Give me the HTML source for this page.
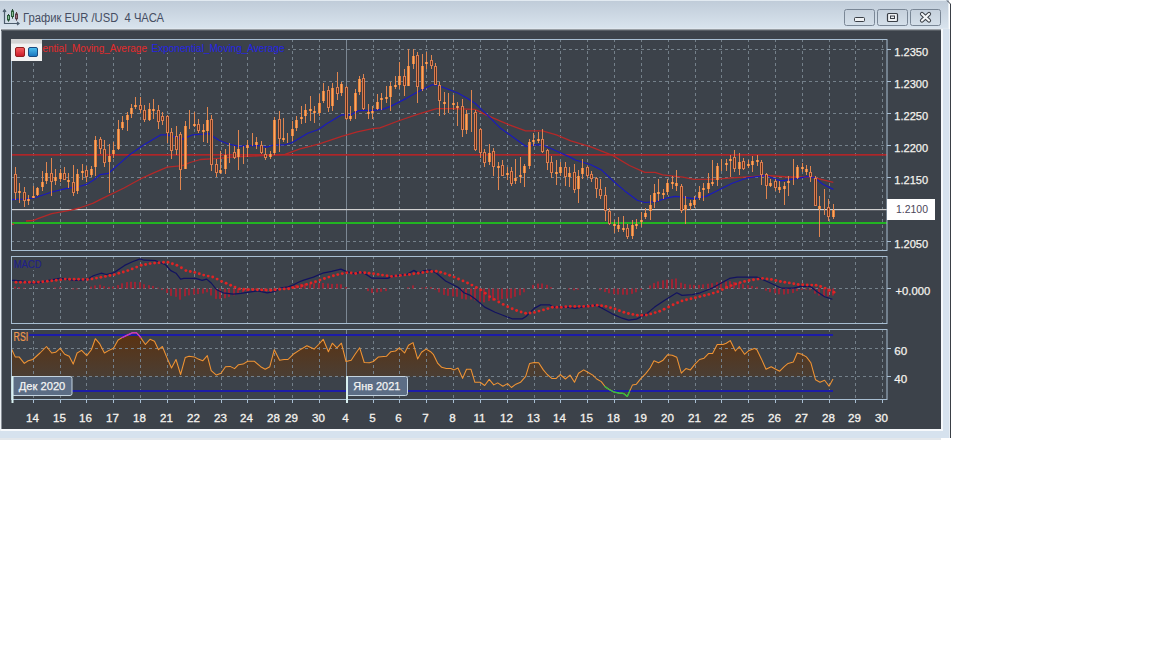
<!DOCTYPE html><html><head><meta charset="utf-8"><title>EUR/USD</title><style>html,body{margin:0;padding:0;background:#fff;width:1152px;height:648px;overflow:hidden}svg{display:block}</style></head><body><svg width="1152" height="648" viewBox="0 0 1152 648"><defs><linearGradient id="tb" x1="0" y1="0" x2="0" y2="1"><stop offset="0" stop-color="#bfcbd8"/><stop offset="1" stop-color="#d9e4ee"/></linearGradient><linearGradient id="btn" x1="0" y1="0" x2="0" y2="1"><stop offset="0" stop-color="#c5d0dc"/><stop offset="1" stop-color="#d5e0ea"/></linearGradient><clipPath id="cmain"><rect x="12" y="40" width="875" height="210"/></clipPath><clipPath id="cmacd"><rect x="12" y="257" width="875" height="66"/></clipPath><clipPath id="crsi"><rect x="12" y="330" width="875" height="69"/></clipPath><clipPath id="crsimag"><rect x="12" y="330" width="875" height="8"/></clipPath><clipPath id="crsigrn"><rect x="600" y="386" width="30" height="13"/></clipPath><clipPath id="crsifill"><rect x="12" y="330" width="875" height="46.8"/></clipPath></defs><rect x="0" y="0" width="949" height="29" fill="url(#tb)"/><rect x="0" y="0" width="947" height="1" fill="#e2eaf1"/><rect x="0" y="28" width="949" height="1" fill="#dfe7ef"/><rect x="948" y="2" width="1" height="27" fill="#e6edf3"/><rect x="941" y="29" width="9" height="409" fill="#d6e2ee"/><rect x="941" y="29" width="2" height="402" fill="#f4f8fb"/><rect x="949" y="29" width="1" height="409" fill="#e8eef4"/><path d="M947 0.5 L950.5 4 L950.5 438" stroke="#3a3f46" stroke-width="1" fill="none"/><rect x="0" y="429" width="943" height="2" fill="#f6f9fc"/><rect x="0" y="431" width="949" height="7" fill="#d6e2ee"/><rect x="0" y="438" width="941" height="2" fill="#e3e7eb"/><rect x="0" y="29" width="1" height="402" fill="#eef2f6"/><rect x="1" y="29" width="1" height="400" fill="#8a9098"/><rect x="2" y="29" width="939" height="400" fill="#3c424a"/><rect x="1" y="29" width="940" height="1" fill="#9aa0a6"/><rect x="1" y="30" width="940" height="1" fill="#585e65"/><g stroke="#4c5c6c" stroke-width="1.2" fill="none"><path d="M4.5 10 V23.5 H18.5"/><path d="M3 11.8 L4.5 9.8 L6 11.8"/><path d="M17 22 L19 23.5 L17 25"/></g><path d="M8.5 14V21.7M12.5 9V18.7" stroke="#2a4a36" stroke-width="1"/><rect x="7.5" y="15.5" width="2" height="4.5" fill="#8cc098" stroke="#2a5a3a" stroke-width="1"/><rect x="11.5" y="11" width="2" height="5.5" fill="#8cc098" stroke="#2a5a3a" stroke-width="1"/><path d="M16.5 12V20.7" stroke="#553840" stroke-width="1"/><rect x="15.5" y="14" width="2" height="4.7" fill="#a07080" stroke="#5a3a44" stroke-width="1"/><text xml:space="preserve" x="23" y="21.5" font-family="Liberation Sans" font-size="12.3" fill="#454d62" textLength="141" lengthAdjust="spacingAndGlyphs">График EUR /USD  4 ЧАСА</text><rect x="844.5" y="9.5" width="30" height="16" rx="2" fill="url(#btn)" stroke="#7a8796" stroke-width="1"/><rect x="877.5" y="9.5" width="30" height="16" rx="2" fill="url(#btn)" stroke="#7a8796" stroke-width="1"/><rect x="910.5" y="9.5" width="30" height="16" rx="2" fill="url(#btn)" stroke="#7a8796" stroke-width="1"/><rect x="854.5" y="17.5" width="10" height="4" rx="1" fill="#eef1f4" stroke="#3a3f46" stroke-width="1"/><rect x="887.5" y="13.5" width="10" height="8" rx="1" fill="#eef1f4" stroke="#3a3f46" stroke-width="1.2"/><rect x="890.5" y="16" width="4" height="2.5" fill="none" stroke="#3a3f46" stroke-width="1"/><path d="M922 14 L929 20.5 M929 14 L922 20.5" stroke="#3a3f46" stroke-width="4.2" stroke-linecap="round"/><path d="M922 14 L929 20.5 M929 14 L922 20.5" stroke="#f4f6f8" stroke-width="2.2" stroke-linecap="round"/><defs><linearGradient id="rsig" gradientUnits="userSpaceOnUse" x1="0" y1="332" x2="0" y2="377"><stop offset="0" stop-color="#5c3210"/><stop offset="1" stop-color="#4a3e34"/></linearGradient></defs><path d="M11.3 348.4 L15.2 356.9 L19.1 356.9 L24.3 363.4 L28.2 360.8 L32.8 359.5 L40 353 L46.5 346.5 L51.7 353 L55.6 352.3 L60.1 348.4 L64.7 354.3 L69.2 356.3 L73.2 364.1 L77.1 353 L81.6 350.4 L86.8 355.6 L91.4 349.7 L95.3 338.7 L99.8 343.9 L104.4 353 L109 350.4 L113.5 348.2 L118.1 340 L122.6 337.4 L127.2 335.2 L132.4 332.8 L136.3 332.6 L139.6 336.1 L145.4 344.5 L150 339.3 L154.5 341.3 L158.5 349.7 L162.4 346.5 L166.9 357.6 L171.5 368 L176 359.5 L180.6 374.5 L185.2 357.6 L189.1 356.3 L194.3 356.9 L198.2 359.1 L202.7 360.8 L207.3 355.6 L211.2 370.6 L216.4 375.1 L221 373.2 L225.5 366.7 L230.1 366.4 L234.6 368.6 L238.5 364.7 L243.1 364.1 L247.7 361.2 L254.2 361.2 L260.7 366.7 L265.2 369.3 L269.8 366.7 L274.3 349.7 L279.6 360.2 L284.1 359.5 L288 359.5 L293.2 354.3 L299.1 350.4 L306.9 345.8 L314.1 349.1 L318.6 344.5 L323.2 339.3 L328.4 351.7 L332.3 343.2 L336.9 347.8 L341.4 343.2 L346 361.5 L351.2 360.2 L355.1 354.3 L359.7 347.8 L364.2 362.5 L369.4 362.8 L373.3 361.5 L378.5 356.9 L386.4 356.3 L390.9 351.7 L395.5 351 L399.4 347.8 L404.6 353 L408.5 345.2 L413 342.6 L417.6 358.9 L421.5 352.3 L426.1 349.1 L430.6 351.7 L433.3 354.3 L437.8 363.4 L441.7 367.3 L446.3 368.4 L450.8 368.6 L454.1 369.9 L458 368 L462.6 378.4 L466.5 369.3 L471 369.3 L474.9 382.3 L480.1 382.3 L484.7 385.5 L489.2 379.4 L493.8 384.9 L497.7 382.9 L502.9 386.2 L507.5 383.6 L511.4 387.5 L515.9 384.2 L520.5 382.3 L525.7 376.4 L529.6 363.4 L534.2 362.5 L538.7 362.8 L543.3 369.9 L547.2 374.5 L551.7 378.4 L556.3 378.4 L560.2 374.5 L565.4 379 L570 375.1 L574.5 382.3 L578.5 373.2 L583.7 369.9 L588.2 372.5 L592.8 375.1 L596.7 379 L601.3 381.6 L605.2 386.8 L609.1 389.5 L614.3 392.1 L618.8 393 L623.4 393.4 L627.3 396.4 L632.5 384.9 L636.4 384.2 L641 378.4 L645.5 373.8 L650.1 368 L654 360.8 L658.5 362.8 L663.1 360.2 L667.7 354.7 L672.2 355.2 L676.8 357.3 L681.3 373.2 L685.9 368.6 L690.4 369.9 L695 364.1 L699.6 359.5 L704.1 358.2 L708.7 353.4 L712.6 353.4 L717.2 344.5 L723 344.5 L726.3 343.2 L730.2 340.6 L735.4 351 L739.3 346.5 L744.5 354.3 L749.1 350.4 L754.3 348.4 L756.9 349.7 L761.4 358.9 L766 369.3 L771.2 366.7 L775.8 369.3 L779.7 371.2 L784.2 366.7 L788.1 363.4 L793.3 362.1 L797.2 353 L801.8 354.3 L806.4 356.9 L810.9 362.8 L815.5 379.7 L820 382.3 L824.6 380.3 L829.1 386.2 L833 379 L833 400 L11.3 400Z" fill="url(#rsig)" clip-path="url(#crsifill)"/><g><line x1="33.5" y1="39" x2="33.5" y2="250" stroke="#74808a" stroke-width="1" stroke-dasharray="3 3"/><line x1="33.5" y1="256" x2="33.5" y2="323" stroke="#74808a" stroke-width="1" stroke-dasharray="3 3"/><line x1="33.5" y1="329" x2="33.5" y2="399" stroke="#74808a" stroke-width="1" stroke-dasharray="3 3"/><line x1="60.5" y1="39" x2="60.5" y2="250" stroke="#74808a" stroke-width="1" stroke-dasharray="3 3"/><line x1="60.5" y1="256" x2="60.5" y2="323" stroke="#74808a" stroke-width="1" stroke-dasharray="3 3"/><line x1="60.5" y1="329" x2="60.5" y2="399" stroke="#74808a" stroke-width="1" stroke-dasharray="3 3"/><line x1="86.5" y1="39" x2="86.5" y2="250" stroke="#74808a" stroke-width="1" stroke-dasharray="3 3"/><line x1="86.5" y1="256" x2="86.5" y2="323" stroke="#74808a" stroke-width="1" stroke-dasharray="3 3"/><line x1="86.5" y1="329" x2="86.5" y2="399" stroke="#74808a" stroke-width="1" stroke-dasharray="3 3"/><line x1="113.5" y1="39" x2="113.5" y2="250" stroke="#74808a" stroke-width="1" stroke-dasharray="3 3"/><line x1="113.5" y1="256" x2="113.5" y2="323" stroke="#74808a" stroke-width="1" stroke-dasharray="3 3"/><line x1="113.5" y1="329" x2="113.5" y2="399" stroke="#74808a" stroke-width="1" stroke-dasharray="3 3"/><line x1="140.5" y1="39" x2="140.5" y2="250" stroke="#74808a" stroke-width="1" stroke-dasharray="3 3"/><line x1="140.5" y1="256" x2="140.5" y2="323" stroke="#74808a" stroke-width="1" stroke-dasharray="3 3"/><line x1="140.5" y1="329" x2="140.5" y2="399" stroke="#74808a" stroke-width="1" stroke-dasharray="3 3"/><line x1="167.5" y1="39" x2="167.5" y2="250" stroke="#74808a" stroke-width="1" stroke-dasharray="3 3"/><line x1="167.5" y1="256" x2="167.5" y2="323" stroke="#74808a" stroke-width="1" stroke-dasharray="3 3"/><line x1="167.5" y1="329" x2="167.5" y2="399" stroke="#74808a" stroke-width="1" stroke-dasharray="3 3"/><line x1="194.5" y1="39" x2="194.5" y2="250" stroke="#74808a" stroke-width="1" stroke-dasharray="3 3"/><line x1="194.5" y1="256" x2="194.5" y2="323" stroke="#74808a" stroke-width="1" stroke-dasharray="3 3"/><line x1="194.5" y1="329" x2="194.5" y2="399" stroke="#74808a" stroke-width="1" stroke-dasharray="3 3"/><line x1="221.5" y1="39" x2="221.5" y2="250" stroke="#74808a" stroke-width="1" stroke-dasharray="3 3"/><line x1="221.5" y1="256" x2="221.5" y2="323" stroke="#74808a" stroke-width="1" stroke-dasharray="3 3"/><line x1="221.5" y1="329" x2="221.5" y2="399" stroke="#74808a" stroke-width="1" stroke-dasharray="3 3"/><line x1="247.5" y1="39" x2="247.5" y2="250" stroke="#74808a" stroke-width="1" stroke-dasharray="3 3"/><line x1="247.5" y1="256" x2="247.5" y2="323" stroke="#74808a" stroke-width="1" stroke-dasharray="3 3"/><line x1="247.5" y1="329" x2="247.5" y2="399" stroke="#74808a" stroke-width="1" stroke-dasharray="3 3"/><line x1="274.5" y1="39" x2="274.5" y2="250" stroke="#74808a" stroke-width="1" stroke-dasharray="3 3"/><line x1="274.5" y1="256" x2="274.5" y2="323" stroke="#74808a" stroke-width="1" stroke-dasharray="3 3"/><line x1="274.5" y1="329" x2="274.5" y2="399" stroke="#74808a" stroke-width="1" stroke-dasharray="3 3"/><line x1="292.5" y1="39" x2="292.5" y2="250" stroke="#74808a" stroke-width="1" stroke-dasharray="3 3"/><line x1="292.5" y1="256" x2="292.5" y2="323" stroke="#74808a" stroke-width="1" stroke-dasharray="3 3"/><line x1="292.5" y1="329" x2="292.5" y2="399" stroke="#74808a" stroke-width="1" stroke-dasharray="3 3"/><line x1="319.5" y1="39" x2="319.5" y2="250" stroke="#74808a" stroke-width="1" stroke-dasharray="3 3"/><line x1="319.5" y1="256" x2="319.5" y2="323" stroke="#74808a" stroke-width="1" stroke-dasharray="3 3"/><line x1="319.5" y1="329" x2="319.5" y2="399" stroke="#74808a" stroke-width="1" stroke-dasharray="3 3"/><line x1="346.5" y1="39.5" x2="346.5" y2="250.5" stroke="#7c8894" stroke-width="1"/><line x1="346.5" y1="256.5" x2="346.5" y2="323.5" stroke="#7c8894" stroke-width="1"/><line x1="346.5" y1="329.5" x2="346.5" y2="399.5" stroke="#7c8894" stroke-width="1"/><line x1="373.5" y1="39" x2="373.5" y2="250" stroke="#74808a" stroke-width="1" stroke-dasharray="3 3"/><line x1="373.5" y1="256" x2="373.5" y2="323" stroke="#74808a" stroke-width="1" stroke-dasharray="3 3"/><line x1="373.5" y1="329" x2="373.5" y2="399" stroke="#74808a" stroke-width="1" stroke-dasharray="3 3"/><line x1="399.5" y1="39" x2="399.5" y2="250" stroke="#74808a" stroke-width="1" stroke-dasharray="3 3"/><line x1="399.5" y1="256" x2="399.5" y2="323" stroke="#74808a" stroke-width="1" stroke-dasharray="3 3"/><line x1="399.5" y1="329" x2="399.5" y2="399" stroke="#74808a" stroke-width="1" stroke-dasharray="3 3"/><line x1="426.5" y1="39" x2="426.5" y2="250" stroke="#74808a" stroke-width="1" stroke-dasharray="3 3"/><line x1="426.5" y1="256" x2="426.5" y2="323" stroke="#74808a" stroke-width="1" stroke-dasharray="3 3"/><line x1="426.5" y1="329" x2="426.5" y2="399" stroke="#74808a" stroke-width="1" stroke-dasharray="3 3"/><line x1="453.5" y1="39" x2="453.5" y2="250" stroke="#74808a" stroke-width="1" stroke-dasharray="3 3"/><line x1="453.5" y1="256" x2="453.5" y2="323" stroke="#74808a" stroke-width="1" stroke-dasharray="3 3"/><line x1="453.5" y1="329" x2="453.5" y2="399" stroke="#74808a" stroke-width="1" stroke-dasharray="3 3"/><line x1="480.5" y1="39" x2="480.5" y2="250" stroke="#74808a" stroke-width="1" stroke-dasharray="3 3"/><line x1="480.5" y1="256" x2="480.5" y2="323" stroke="#74808a" stroke-width="1" stroke-dasharray="3 3"/><line x1="480.5" y1="329" x2="480.5" y2="399" stroke="#74808a" stroke-width="1" stroke-dasharray="3 3"/><line x1="507.5" y1="39" x2="507.5" y2="250" stroke="#74808a" stroke-width="1" stroke-dasharray="3 3"/><line x1="507.5" y1="256" x2="507.5" y2="323" stroke="#74808a" stroke-width="1" stroke-dasharray="3 3"/><line x1="507.5" y1="329" x2="507.5" y2="399" stroke="#74808a" stroke-width="1" stroke-dasharray="3 3"/><line x1="534.5" y1="39" x2="534.5" y2="250" stroke="#74808a" stroke-width="1" stroke-dasharray="3 3"/><line x1="534.5" y1="256" x2="534.5" y2="323" stroke="#74808a" stroke-width="1" stroke-dasharray="3 3"/><line x1="534.5" y1="329" x2="534.5" y2="399" stroke="#74808a" stroke-width="1" stroke-dasharray="3 3"/><line x1="560.5" y1="39" x2="560.5" y2="250" stroke="#74808a" stroke-width="1" stroke-dasharray="3 3"/><line x1="560.5" y1="256" x2="560.5" y2="323" stroke="#74808a" stroke-width="1" stroke-dasharray="3 3"/><line x1="560.5" y1="329" x2="560.5" y2="399" stroke="#74808a" stroke-width="1" stroke-dasharray="3 3"/><line x1="587.5" y1="39" x2="587.5" y2="250" stroke="#74808a" stroke-width="1" stroke-dasharray="3 3"/><line x1="587.5" y1="256" x2="587.5" y2="323" stroke="#74808a" stroke-width="1" stroke-dasharray="3 3"/><line x1="587.5" y1="329" x2="587.5" y2="399" stroke="#74808a" stroke-width="1" stroke-dasharray="3 3"/><line x1="614.5" y1="39" x2="614.5" y2="250" stroke="#74808a" stroke-width="1" stroke-dasharray="3 3"/><line x1="614.5" y1="256" x2="614.5" y2="323" stroke="#74808a" stroke-width="1" stroke-dasharray="3 3"/><line x1="614.5" y1="329" x2="614.5" y2="399" stroke="#74808a" stroke-width="1" stroke-dasharray="3 3"/><line x1="641.5" y1="39" x2="641.5" y2="250" stroke="#74808a" stroke-width="1" stroke-dasharray="3 3"/><line x1="641.5" y1="256" x2="641.5" y2="323" stroke="#74808a" stroke-width="1" stroke-dasharray="3 3"/><line x1="641.5" y1="329" x2="641.5" y2="399" stroke="#74808a" stroke-width="1" stroke-dasharray="3 3"/><line x1="668.5" y1="39" x2="668.5" y2="250" stroke="#74808a" stroke-width="1" stroke-dasharray="3 3"/><line x1="668.5" y1="256" x2="668.5" y2="323" stroke="#74808a" stroke-width="1" stroke-dasharray="3 3"/><line x1="668.5" y1="329" x2="668.5" y2="399" stroke="#74808a" stroke-width="1" stroke-dasharray="3 3"/><line x1="695.5" y1="39" x2="695.5" y2="250" stroke="#74808a" stroke-width="1" stroke-dasharray="3 3"/><line x1="695.5" y1="256" x2="695.5" y2="323" stroke="#74808a" stroke-width="1" stroke-dasharray="3 3"/><line x1="695.5" y1="329" x2="695.5" y2="399" stroke="#74808a" stroke-width="1" stroke-dasharray="3 3"/><line x1="721.5" y1="39" x2="721.5" y2="250" stroke="#74808a" stroke-width="1" stroke-dasharray="3 3"/><line x1="721.5" y1="256" x2="721.5" y2="323" stroke="#74808a" stroke-width="1" stroke-dasharray="3 3"/><line x1="721.5" y1="329" x2="721.5" y2="399" stroke="#74808a" stroke-width="1" stroke-dasharray="3 3"/><line x1="748.5" y1="39" x2="748.5" y2="250" stroke="#74808a" stroke-width="1" stroke-dasharray="3 3"/><line x1="748.5" y1="256" x2="748.5" y2="323" stroke="#74808a" stroke-width="1" stroke-dasharray="3 3"/><line x1="748.5" y1="329" x2="748.5" y2="399" stroke="#74808a" stroke-width="1" stroke-dasharray="3 3"/><line x1="775.5" y1="39" x2="775.5" y2="250" stroke="#74808a" stroke-width="1" stroke-dasharray="3 3"/><line x1="775.5" y1="256" x2="775.5" y2="323" stroke="#74808a" stroke-width="1" stroke-dasharray="3 3"/><line x1="775.5" y1="329" x2="775.5" y2="399" stroke="#74808a" stroke-width="1" stroke-dasharray="3 3"/><line x1="802.5" y1="39" x2="802.5" y2="250" stroke="#74808a" stroke-width="1" stroke-dasharray="3 3"/><line x1="802.5" y1="256" x2="802.5" y2="323" stroke="#74808a" stroke-width="1" stroke-dasharray="3 3"/><line x1="802.5" y1="329" x2="802.5" y2="399" stroke="#74808a" stroke-width="1" stroke-dasharray="3 3"/><line x1="829.5" y1="39" x2="829.5" y2="250" stroke="#74808a" stroke-width="1" stroke-dasharray="3 3"/><line x1="829.5" y1="256" x2="829.5" y2="323" stroke="#74808a" stroke-width="1" stroke-dasharray="3 3"/><line x1="829.5" y1="329" x2="829.5" y2="399" stroke="#74808a" stroke-width="1" stroke-dasharray="3 3"/><line x1="855.5" y1="39" x2="855.5" y2="250" stroke="#74808a" stroke-width="1" stroke-dasharray="3 3"/><line x1="855.5" y1="256" x2="855.5" y2="323" stroke="#74808a" stroke-width="1" stroke-dasharray="3 3"/><line x1="855.5" y1="329" x2="855.5" y2="399" stroke="#74808a" stroke-width="1" stroke-dasharray="3 3"/><line x1="882.5" y1="39" x2="882.5" y2="250" stroke="#74808a" stroke-width="1" stroke-dasharray="3 3"/><line x1="882.5" y1="256" x2="882.5" y2="323" stroke="#74808a" stroke-width="1" stroke-dasharray="3 3"/><line x1="882.5" y1="329" x2="882.5" y2="399" stroke="#74808a" stroke-width="1" stroke-dasharray="3 3"/><line x1="11" y1="49.5" x2="886" y2="49.5" stroke="#74808a" stroke-width="1" stroke-dasharray="3 3"/><line x1="11" y1="81.5" x2="886" y2="81.5" stroke="#74808a" stroke-width="1" stroke-dasharray="3 3"/><line x1="11" y1="113.5" x2="886" y2="113.5" stroke="#74808a" stroke-width="1" stroke-dasharray="3 3"/><line x1="11" y1="145.5" x2="886" y2="145.5" stroke="#74808a" stroke-width="1" stroke-dasharray="3 3"/><line x1="11" y1="177.5" x2="886" y2="177.5" stroke="#74808a" stroke-width="1" stroke-dasharray="3 3"/><line x1="11" y1="241.5" x2="886" y2="241.5" stroke="#74808a" stroke-width="1" stroke-dasharray="3 3"/><line x1="11" y1="288.5" x2="886" y2="288.5" stroke="#74808a" stroke-width="1" stroke-dasharray="3 3"/><line x1="11" y1="348.5" x2="886" y2="348.5" stroke="#74808a" stroke-width="1" stroke-dasharray="3 3"/><line x1="11" y1="376.5" x2="886" y2="376.5" stroke="#74808a" stroke-width="1" stroke-dasharray="3 3"/></g><g clip-path="url(#cmain)"><rect x="12" y="154" width="875" height="1.7" fill="#ae2628"/><rect x="12" y="209" width="875" height="1.2" fill="#d0d0d0"/><rect x="12" y="222" width="875" height="2" fill="#22b422"/><path d="M26 221 L33.5 220.5 L37.8 218.6 L51.7 213.6 L71.1 210.1 L79.4 208 L93.3 203.2 L100 199.7 L124 188 L140.9 178.7 L154.3 172.7 L167.2 167.2 L182.6 165.6 L190 162.5 L200.4 159.5 L215.9 158.7 L231.3 157.2 L246.7 156.4 L262.2 155.6 L285 154.4 L300 148.8 L318.6 144.1 L341.7 136.4 L357.2 131.8 L372.6 128.7 L380 127.9 L398.1 121 L418.2 114.1 L436.7 108.7 L452.2 108.7 L475 109.4 L485.4 114.7 L508.6 124.7 L525.6 130.9 L542.5 130.9 L556.4 134.8 L570.8 140.8 L590.9 146.9 L612.5 155.4 L629.4 165.5 L644.9 172.4 L655 172.4 L662.7 174.8 L682.8 177.1 L693.6 179.4 L716.7 179.1 L732.2 177.8 L755 176.3 L765.4 175.5 L788.6 177 L811.7 177 L827.2 180.9 L833.3 182.4" fill="none" stroke="#b42828" stroke-width="1.3" stroke-linejoin="round" /><rect x="11" y="223.5" width="3" height="1.5" fill="#c03030"/><path d="M10 199.7 L23.9 199 L34.3 198 L51.7 192 L65.6 188.6 L79.4 186.5 L86.4 184.4 L93.3 180.3 L100 174.7 L108.5 173.3 L128.6 155.6 L144 144.8 L161 134.8 L167.2 134.8 L176.4 137.1 L182.6 139.1 L192.7 134.8 L205 134 L208.1 133.2 L219 140.2 L228.2 144 L239 146.4 L249.8 145.6 L259.1 145.6 L266.8 147.1 L274.5 144.8 L285 144.8 L292.3 142.6 L307.8 133.3 L318.6 129.5 L326.3 124.1 L341.7 114.8 L351 114.8 L358.7 110.6 L375 110.2 L382.7 109.4 L390.4 106.4 L405.9 98.6 L416.7 92.5 L432.1 84.8 L435.2 84.8 L444.4 87.8 L458.3 93.2 L467.6 98.6 L475 103.3 L485.4 113.1 L500.9 128.6 L516.3 139.4 L525.6 146.3 L534.8 144.8 L542.5 144.8 L556.4 151 L570 157.1 L575.4 160 L590.9 164.7 L601.7 170.1 L614 181.7 L624.8 190.9 L637.2 200.2 L644.9 202.5 L655.7 201.7 L667.3 197.9 L675.1 196.4 L682.8 197.1 L693.6 198.7 L705.9 196.4 L716.7 191 L732.2 183.2 L747.6 177.8 L765.4 175.5 L780.9 180.9 L796.3 178.6 L808.6 176.3 L814.8 177.8 L822.5 184 L833.3 189.4" fill="none" stroke="#1a1abc" stroke-width="1.2" stroke-linejoin="round" /><g shape-rendering="crispEdges"><rect x="15" y="167" width="1" height="33.4" fill="#e08650"/><rect x="14" y="174" width="1" height="18.8" fill="#d87c50"/><rect x="16" y="174" width="1" height="18.8" fill="#d87c50"/><rect x="15" y="174" width="1" height="1" fill="#d87c50"/><rect x="15" y="191.8" width="1" height="1" fill="#d87c50"/><rect x="15" y="175" width="1" height="16.8" fill="#5e2e1a"/><rect x="19" y="183" width="1" height="20" fill="#e08650"/><rect x="18" y="191" width="1" height="2" fill="#e4823e"/><rect x="19" y="191" width="1" height="2" fill="#f8a860"/><rect x="20" y="191" width="1" height="2" fill="#dc7a3c"/><rect x="24" y="187" width="1" height="19.7" fill="#e08650"/><rect x="23" y="192" width="1" height="9" fill="#d87c50"/><rect x="25" y="192" width="1" height="9" fill="#d87c50"/><rect x="24" y="192" width="1" height="1" fill="#d87c50"/><rect x="24" y="200" width="1" height="1" fill="#d87c50"/><rect x="24" y="193" width="1" height="7" fill="#5e2e1a"/><rect x="28" y="195" width="1" height="9.6" fill="#e08650"/><rect x="27" y="199" width="1" height="2" fill="#e4823e"/><rect x="28" y="199" width="1" height="2" fill="#f8a860"/><rect x="29" y="199" width="1" height="2" fill="#dc7a3c"/><rect x="33" y="186" width="1" height="11.6" fill="#e08650"/><rect x="32" y="196" width="1" height="2" fill="#e4823e"/><rect x="33" y="196" width="1" height="2" fill="#f8a860"/><rect x="34" y="196" width="1" height="2" fill="#dc7a3c"/><rect x="37" y="186.5" width="1" height="9" fill="#e08650"/><rect x="36" y="188" width="1" height="7" fill="#e4823e"/><rect x="37" y="188" width="1" height="7" fill="#f8a860"/><rect x="38" y="188" width="1" height="7" fill="#dc7a3c"/><rect x="42" y="171" width="1" height="19.7" fill="#e08650"/><rect x="41" y="181.7" width="1" height="5.3" fill="#e4823e"/><rect x="42" y="181.7" width="1" height="5.3" fill="#f8a860"/><rect x="43" y="181.7" width="1" height="5.3" fill="#dc7a3c"/><rect x="46" y="162" width="1" height="22.4" fill="#e08650"/><rect x="45" y="173" width="1" height="8" fill="#e4823e"/><rect x="46" y="173" width="1" height="8" fill="#f8a860"/><rect x="47" y="173" width="1" height="8" fill="#dc7a3c"/><rect x="51" y="158" width="1" height="37.5" fill="#e08650"/><rect x="50" y="172.6" width="1" height="9.1" fill="#d87c50"/><rect x="52" y="172.6" width="1" height="9.1" fill="#d87c50"/><rect x="51" y="172.6" width="1" height="1" fill="#d87c50"/><rect x="51" y="180.7" width="1" height="1" fill="#d87c50"/><rect x="51" y="173.6" width="1" height="7.1" fill="#5e2e1a"/><rect x="55" y="169" width="1" height="16" fill="#e08650"/><rect x="54" y="177" width="1" height="4" fill="#e4823e"/><rect x="55" y="177" width="1" height="4" fill="#f8a860"/><rect x="56" y="177" width="1" height="4" fill="#dc7a3c"/><rect x="60" y="169" width="1" height="13" fill="#e08650"/><rect x="59" y="173" width="1" height="6" fill="#e4823e"/><rect x="60" y="173" width="1" height="6" fill="#f8a860"/><rect x="61" y="173" width="1" height="6" fill="#dc7a3c"/><rect x="64" y="167" width="1" height="13" fill="#e08650"/><rect x="63" y="172.6" width="1" height="7" fill="#d87c50"/><rect x="65" y="172.6" width="1" height="7" fill="#d87c50"/><rect x="64" y="172.6" width="1" height="1" fill="#d87c50"/><rect x="64" y="178.6" width="1" height="1" fill="#d87c50"/><rect x="64" y="173.6" width="1" height="5" fill="#5e2e1a"/><rect x="68" y="173" width="1" height="15" fill="#e08650"/><rect x="67" y="179.6" width="1" height="2.8" fill="#e4823e"/><rect x="68" y="179.6" width="1" height="2.8" fill="#f8a860"/><rect x="69" y="179.6" width="1" height="2.8" fill="#dc7a3c"/><rect x="73" y="165" width="1" height="30.5" fill="#e08650"/><rect x="72" y="182" width="1" height="11" fill="#d87c50"/><rect x="74" y="182" width="1" height="11" fill="#d87c50"/><rect x="73" y="182" width="1" height="1" fill="#d87c50"/><rect x="73" y="192" width="1" height="1" fill="#d87c50"/><rect x="73" y="183" width="1" height="9" fill="#5e2e1a"/><rect x="77" y="169" width="1" height="24.5" fill="#e08650"/><rect x="76" y="174" width="1" height="17" fill="#e4823e"/><rect x="77" y="174" width="1" height="17" fill="#f8a860"/><rect x="78" y="174" width="1" height="17" fill="#dc7a3c"/><rect x="82" y="164" width="1" height="15.6" fill="#e08650"/><rect x="81" y="171" width="1" height="2" fill="#e4823e"/><rect x="82" y="171" width="1" height="2" fill="#f8a860"/><rect x="83" y="171" width="1" height="2" fill="#dc7a3c"/><rect x="86" y="165.7" width="1" height="16" fill="#e08650"/><rect x="85" y="170" width="1" height="6.8" fill="#d87c50"/><rect x="87" y="170" width="1" height="6.8" fill="#d87c50"/><rect x="86" y="170" width="1" height="1" fill="#d87c50"/><rect x="86" y="175.8" width="1" height="1" fill="#d87c50"/><rect x="86" y="171" width="1" height="4.8" fill="#5e2e1a"/><rect x="91" y="165.6" width="1" height="11.4" fill="#e08650"/><rect x="90" y="168.5" width="1" height="6.9" fill="#e4823e"/><rect x="91" y="168.5" width="1" height="6.9" fill="#f8a860"/><rect x="92" y="168.5" width="1" height="6.9" fill="#dc7a3c"/><rect x="95" y="135.5" width="1" height="40.1" fill="#e08650"/><rect x="94" y="140" width="1" height="27" fill="#e4823e"/><rect x="95" y="140" width="1" height="27" fill="#f8a860"/><rect x="96" y="140" width="1" height="27" fill="#dc7a3c"/><rect x="100" y="137" width="1" height="17" fill="#e08650"/><rect x="99" y="138.6" width="1" height="10.8" fill="#d87c50"/><rect x="101" y="138.6" width="1" height="10.8" fill="#d87c50"/><rect x="100" y="138.6" width="1" height="1" fill="#d87c50"/><rect x="100" y="148.4" width="1" height="1" fill="#d87c50"/><rect x="100" y="139.6" width="1" height="8.8" fill="#5e2e1a"/><rect x="104" y="140" width="1" height="27" fill="#e08650"/><rect x="103" y="148.6" width="1" height="13.9" fill="#d87c50"/><rect x="105" y="148.6" width="1" height="13.9" fill="#d87c50"/><rect x="104" y="148.6" width="1" height="1" fill="#d87c50"/><rect x="104" y="161.5" width="1" height="1" fill="#d87c50"/><rect x="104" y="149.6" width="1" height="11.9" fill="#5e2e1a"/><rect x="109" y="144" width="1" height="49" fill="#e08650"/><rect x="108" y="155.6" width="1" height="6.2" fill="#e4823e"/><rect x="109" y="155.6" width="1" height="6.2" fill="#f8a860"/><rect x="110" y="155.6" width="1" height="6.2" fill="#dc7a3c"/><rect x="113" y="141.7" width="1" height="16.2" fill="#e08650"/><rect x="112" y="150" width="1" height="4" fill="#e4823e"/><rect x="113" y="150" width="1" height="4" fill="#f8a860"/><rect x="114" y="150" width="1" height="4" fill="#dc7a3c"/><rect x="118" y="120" width="1" height="30" fill="#e08650"/><rect x="117" y="129.4" width="1" height="19.2" fill="#e4823e"/><rect x="118" y="129.4" width="1" height="19.2" fill="#f8a860"/><rect x="119" y="129.4" width="1" height="19.2" fill="#dc7a3c"/><rect x="122" y="115.5" width="1" height="14.5" fill="#e08650"/><rect x="121" y="122.4" width="1" height="5.4" fill="#e4823e"/><rect x="122" y="122.4" width="1" height="5.4" fill="#f8a860"/><rect x="123" y="122.4" width="1" height="5.4" fill="#dc7a3c"/><rect x="127" y="112.4" width="1" height="18.5" fill="#e08650"/><rect x="126" y="114.7" width="1" height="5.3" fill="#e4823e"/><rect x="127" y="114.7" width="1" height="5.3" fill="#f8a860"/><rect x="128" y="114.7" width="1" height="5.3" fill="#dc7a3c"/><rect x="131" y="104" width="1" height="13.8" fill="#e08650"/><rect x="130" y="108" width="1" height="6" fill="#e4823e"/><rect x="131" y="108" width="1" height="6" fill="#f8a860"/><rect x="132" y="108" width="1" height="6" fill="#dc7a3c"/><rect x="135" y="97" width="1" height="12.3" fill="#e08650"/><rect x="134" y="105" width="1" height="2" fill="#e4823e"/><rect x="135" y="105" width="1" height="2" fill="#f8a860"/><rect x="136" y="105" width="1" height="2" fill="#dc7a3c"/><rect x="140" y="97" width="1" height="16" fill="#e08650"/><rect x="139" y="105.4" width="1" height="4.6" fill="#d87c50"/><rect x="141" y="105.4" width="1" height="4.6" fill="#d87c50"/><rect x="140" y="105.4" width="1" height="1" fill="#d87c50"/><rect x="140" y="109" width="1" height="1" fill="#d87c50"/><rect x="140" y="106.4" width="1" height="2.6" fill="#5e2e1a"/><rect x="144" y="105.4" width="1" height="16.2" fill="#e08650"/><rect x="143" y="110" width="1" height="10" fill="#d87c50"/><rect x="145" y="110" width="1" height="10" fill="#d87c50"/><rect x="144" y="110" width="1" height="1" fill="#d87c50"/><rect x="144" y="119" width="1" height="1" fill="#d87c50"/><rect x="144" y="111" width="1" height="8" fill="#5e2e1a"/><rect x="149" y="103" width="1" height="17.9" fill="#e08650"/><rect x="148" y="109.3" width="1" height="10.7" fill="#e4823e"/><rect x="149" y="109.3" width="1" height="10.7" fill="#f8a860"/><rect x="150" y="109.3" width="1" height="10.7" fill="#dc7a3c"/><rect x="153" y="99" width="1" height="19.5" fill="#e08650"/><rect x="152" y="108.5" width="1" height="2" fill="#e4823e"/><rect x="153" y="108.5" width="1" height="2" fill="#f8a860"/><rect x="154" y="108.5" width="1" height="2" fill="#dc7a3c"/><rect x="158" y="105.4" width="1" height="24" fill="#e08650"/><rect x="157" y="110" width="1" height="12.4" fill="#d87c50"/><rect x="159" y="110" width="1" height="12.4" fill="#d87c50"/><rect x="158" y="110" width="1" height="1" fill="#d87c50"/><rect x="158" y="121.4" width="1" height="1" fill="#d87c50"/><rect x="158" y="111" width="1" height="10.4" fill="#5e2e1a"/><rect x="162" y="112.4" width="1" height="12.3" fill="#e08650"/><rect x="161" y="115.5" width="1" height="5.4" fill="#d87c50"/><rect x="163" y="115.5" width="1" height="5.4" fill="#d87c50"/><rect x="162" y="115.5" width="1" height="1" fill="#d87c50"/><rect x="162" y="119.9" width="1" height="1" fill="#d87c50"/><rect x="162" y="116.5" width="1" height="3.4" fill="#5e2e1a"/><rect x="167" y="114.7" width="1" height="28.5" fill="#e08650"/><rect x="166" y="115.5" width="1" height="17.7" fill="#d87c50"/><rect x="168" y="115.5" width="1" height="17.7" fill="#d87c50"/><rect x="167" y="115.5" width="1" height="1" fill="#d87c50"/><rect x="167" y="132.2" width="1" height="1" fill="#d87c50"/><rect x="167" y="116.5" width="1" height="15.7" fill="#5e2e1a"/><rect x="171" y="127.8" width="1" height="30.9" fill="#e08650"/><rect x="170" y="132.4" width="1" height="18.6" fill="#d87c50"/><rect x="172" y="132.4" width="1" height="18.6" fill="#d87c50"/><rect x="171" y="132.4" width="1" height="1" fill="#d87c50"/><rect x="171" y="150" width="1" height="1" fill="#d87c50"/><rect x="171" y="133.4" width="1" height="16.6" fill="#5e2e1a"/><rect x="176" y="126.3" width="1" height="28.5" fill="#e08650"/><rect x="175" y="136.3" width="1" height="13.9" fill="#d87c50"/><rect x="177" y="136.3" width="1" height="13.9" fill="#d87c50"/><rect x="176" y="136.3" width="1" height="1" fill="#d87c50"/><rect x="176" y="149.2" width="1" height="1" fill="#d87c50"/><rect x="176" y="137.3" width="1" height="11.9" fill="#5e2e1a"/><rect x="180" y="132.4" width="1" height="57.6" fill="#e08650"/><rect x="179" y="134" width="1" height="35.5" fill="#d87c50"/><rect x="181" y="134" width="1" height="35.5" fill="#d87c50"/><rect x="180" y="134" width="1" height="1" fill="#d87c50"/><rect x="180" y="168.5" width="1" height="1" fill="#d87c50"/><rect x="180" y="135" width="1" height="33.5" fill="#5e2e1a"/><rect x="185" y="120.9" width="1" height="47.8" fill="#e08650"/><rect x="184" y="126.3" width="1" height="42.4" fill="#e4823e"/><rect x="185" y="126.3" width="1" height="42.4" fill="#f8a860"/><rect x="186" y="126.3" width="1" height="42.4" fill="#dc7a3c"/><rect x="189" y="109.7" width="1" height="19.3" fill="#e08650"/><rect x="194" y="111.6" width="1" height="15.4" fill="#e08650"/><rect x="193" y="123.5" width="1" height="2" fill="#e4823e"/><rect x="194" y="123.5" width="1" height="2" fill="#f8a860"/><rect x="195" y="123.5" width="1" height="2" fill="#dc7a3c"/><rect x="198" y="118.6" width="1" height="14.6" fill="#e08650"/><rect x="197" y="124" width="1" height="7" fill="#d87c50"/><rect x="199" y="124" width="1" height="7" fill="#d87c50"/><rect x="198" y="124" width="1" height="1" fill="#d87c50"/><rect x="198" y="130" width="1" height="1" fill="#d87c50"/><rect x="198" y="125" width="1" height="5" fill="#5e2e1a"/><rect x="203" y="124" width="1" height="17.7" fill="#e08650"/><rect x="202" y="130" width="1" height="2" fill="#e4823e"/><rect x="203" y="130" width="1" height="2" fill="#f8a860"/><rect x="204" y="130" width="1" height="2" fill="#dc7a3c"/><rect x="207" y="107" width="1" height="36.3" fill="#e08650"/><rect x="206" y="120" width="1" height="11" fill="#e4823e"/><rect x="207" y="120" width="1" height="11" fill="#f8a860"/><rect x="208" y="120" width="1" height="11" fill="#dc7a3c"/><rect x="211" y="114.7" width="1" height="56.3" fill="#e08650"/><rect x="210" y="119.4" width="1" height="45.5" fill="#d87c50"/><rect x="212" y="119.4" width="1" height="45.5" fill="#d87c50"/><rect x="211" y="119.4" width="1" height="1" fill="#d87c50"/><rect x="211" y="163.9" width="1" height="1" fill="#d87c50"/><rect x="211" y="120.4" width="1" height="43.5" fill="#5e2e1a"/><rect x="216" y="158.7" width="1" height="18.5" fill="#e08650"/><rect x="215" y="164" width="1" height="8.6" fill="#d87c50"/><rect x="217" y="164" width="1" height="8.6" fill="#d87c50"/><rect x="216" y="164" width="1" height="1" fill="#d87c50"/><rect x="216" y="171.6" width="1" height="1" fill="#d87c50"/><rect x="216" y="165" width="1" height="6.6" fill="#5e2e1a"/><rect x="220" y="151" width="1" height="23" fill="#e08650"/><rect x="219" y="170" width="1" height="2.6" fill="#e4823e"/><rect x="220" y="170" width="1" height="2.6" fill="#f8a860"/><rect x="221" y="170" width="1" height="2.6" fill="#dc7a3c"/><rect x="225" y="149.4" width="1" height="24.6" fill="#e08650"/><rect x="224" y="154.8" width="1" height="13.9" fill="#e4823e"/><rect x="225" y="154.8" width="1" height="13.9" fill="#f8a860"/><rect x="226" y="154.8" width="1" height="13.9" fill="#dc7a3c"/><rect x="229" y="143.3" width="1" height="20" fill="#e08650"/><rect x="234" y="146.4" width="1" height="12.3" fill="#e08650"/><rect x="233" y="151.8" width="1" height="6.2" fill="#d87c50"/><rect x="235" y="151.8" width="1" height="6.2" fill="#d87c50"/><rect x="234" y="151.8" width="1" height="1" fill="#d87c50"/><rect x="234" y="157" width="1" height="1" fill="#d87c50"/><rect x="234" y="152.8" width="1" height="4.2" fill="#5e2e1a"/><rect x="238" y="130" width="1" height="40.3" fill="#e08650"/><rect x="237" y="149.4" width="1" height="7.8" fill="#e4823e"/><rect x="238" y="149.4" width="1" height="7.8" fill="#f8a860"/><rect x="239" y="149.4" width="1" height="7.8" fill="#dc7a3c"/><rect x="243" y="146.4" width="1" height="17.7" fill="#e08650"/><rect x="247" y="140.2" width="1" height="17" fill="#e08650"/><rect x="246" y="144.8" width="1" height="3.2" fill="#e4823e"/><rect x="247" y="144.8" width="1" height="3.2" fill="#f8a860"/><rect x="248" y="144.8" width="1" height="3.2" fill="#dc7a3c"/><rect x="252" y="133.2" width="1" height="13.2" fill="#e08650"/><rect x="256" y="137.1" width="1" height="11.6" fill="#e08650"/><rect x="255" y="141.7" width="1" height="3.1" fill="#e4823e"/><rect x="256" y="141.7" width="1" height="3.1" fill="#f8a860"/><rect x="257" y="141.7" width="1" height="3.1" fill="#dc7a3c"/><rect x="261" y="141" width="1" height="13" fill="#e08650"/><rect x="260" y="144.8" width="1" height="8.5" fill="#d87c50"/><rect x="262" y="144.8" width="1" height="8.5" fill="#d87c50"/><rect x="261" y="144.8" width="1" height="1" fill="#d87c50"/><rect x="261" y="152.3" width="1" height="1" fill="#d87c50"/><rect x="261" y="145.8" width="1" height="6.5" fill="#5e2e1a"/><rect x="265" y="148" width="1" height="11.5" fill="#e08650"/><rect x="264" y="154" width="1" height="4" fill="#d87c50"/><rect x="266" y="154" width="1" height="4" fill="#d87c50"/><rect x="265" y="154" width="1" height="1" fill="#d87c50"/><rect x="265" y="157" width="1" height="1" fill="#d87c50"/><rect x="265" y="155" width="1" height="2" fill="#5e2e1a"/><rect x="270" y="151" width="1" height="7.7" fill="#e08650"/><rect x="269" y="154" width="1" height="3" fill="#e4823e"/><rect x="270" y="154" width="1" height="3" fill="#f8a860"/><rect x="271" y="154" width="1" height="3" fill="#dc7a3c"/><rect x="274" y="117" width="1" height="37.8" fill="#e08650"/><rect x="273" y="120" width="1" height="33.3" fill="#e4823e"/><rect x="274" y="120" width="1" height="33.3" fill="#f8a860"/><rect x="275" y="120" width="1" height="33.3" fill="#dc7a3c"/><rect x="279" y="110.9" width="1" height="40.9" fill="#e08650"/><rect x="278" y="118.6" width="1" height="20.8" fill="#d87c50"/><rect x="280" y="118.6" width="1" height="20.8" fill="#d87c50"/><rect x="279" y="118.6" width="1" height="1" fill="#d87c50"/><rect x="279" y="138.4" width="1" height="1" fill="#d87c50"/><rect x="279" y="119.6" width="1" height="18.8" fill="#5e2e1a"/><rect x="283" y="117.8" width="1" height="23.9" fill="#e08650"/><rect x="282" y="137.5" width="1" height="2" fill="#e4823e"/><rect x="283" y="137.5" width="1" height="2" fill="#f8a860"/><rect x="284" y="137.5" width="1" height="2" fill="#dc7a3c"/><rect x="287" y="133.3" width="1" height="9.3" fill="#e08650"/><rect x="292" y="121" width="1" height="20" fill="#e08650"/><rect x="291" y="128.7" width="1" height="7.7" fill="#e4823e"/><rect x="292" y="128.7" width="1" height="7.7" fill="#f8a860"/><rect x="293" y="128.7" width="1" height="7.7" fill="#dc7a3c"/><rect x="296" y="115.6" width="1" height="15.4" fill="#e08650"/><rect x="295" y="120.2" width="1" height="7.8" fill="#e4823e"/><rect x="296" y="120.2" width="1" height="7.8" fill="#f8a860"/><rect x="297" y="120.2" width="1" height="7.8" fill="#dc7a3c"/><rect x="301" y="106.3" width="1" height="17.7" fill="#e08650"/><rect x="300" y="116.7" width="1" height="2" fill="#e4823e"/><rect x="301" y="116.7" width="1" height="2" fill="#f8a860"/><rect x="302" y="116.7" width="1" height="2" fill="#dc7a3c"/><rect x="305" y="104" width="1" height="18.5" fill="#e08650"/><rect x="304" y="110" width="1" height="5.6" fill="#e4823e"/><rect x="305" y="110" width="1" height="5.6" fill="#f8a860"/><rect x="306" y="110" width="1" height="5.6" fill="#dc7a3c"/><rect x="310" y="96.3" width="1" height="24.7" fill="#e08650"/><rect x="309" y="108.6" width="1" height="2.4" fill="#e4823e"/><rect x="310" y="108.6" width="1" height="2.4" fill="#f8a860"/><rect x="311" y="108.6" width="1" height="2.4" fill="#dc7a3c"/><rect x="314" y="106.3" width="1" height="16.2" fill="#e08650"/><rect x="313" y="111" width="1" height="2.3" fill="#e4823e"/><rect x="314" y="111" width="1" height="2.3" fill="#f8a860"/><rect x="315" y="111" width="1" height="2.3" fill="#dc7a3c"/><rect x="319" y="94" width="1" height="21.6" fill="#e08650"/><rect x="318" y="102.5" width="1" height="10" fill="#e4823e"/><rect x="319" y="102.5" width="1" height="10" fill="#f8a860"/><rect x="320" y="102.5" width="1" height="10" fill="#dc7a3c"/><rect x="323" y="83.2" width="1" height="20" fill="#e08650"/><rect x="322" y="91" width="1" height="10" fill="#e4823e"/><rect x="323" y="91" width="1" height="10" fill="#f8a860"/><rect x="324" y="91" width="1" height="10" fill="#dc7a3c"/><rect x="328" y="85.5" width="1" height="26.2" fill="#e08650"/><rect x="327" y="90.4" width="1" height="17.5" fill="#d87c50"/><rect x="329" y="90.4" width="1" height="17.5" fill="#d87c50"/><rect x="328" y="90.4" width="1" height="1" fill="#d87c50"/><rect x="328" y="106.9" width="1" height="1" fill="#d87c50"/><rect x="328" y="91.4" width="1" height="15.5" fill="#5e2e1a"/><rect x="332" y="83.2" width="1" height="27.8" fill="#e08650"/><rect x="331" y="87.8" width="1" height="18.5" fill="#e4823e"/><rect x="332" y="87.8" width="1" height="18.5" fill="#f8a860"/><rect x="333" y="87.8" width="1" height="18.5" fill="#dc7a3c"/><rect x="337" y="72.4" width="1" height="27.8" fill="#e08650"/><rect x="336" y="87" width="1" height="7" fill="#d87c50"/><rect x="338" y="87" width="1" height="7" fill="#d87c50"/><rect x="337" y="87" width="1" height="1" fill="#d87c50"/><rect x="337" y="93" width="1" height="1" fill="#d87c50"/><rect x="337" y="88" width="1" height="5" fill="#5e2e1a"/><rect x="341" y="81.6" width="1" height="14.7" fill="#e08650"/><rect x="340" y="84" width="1" height="9.2" fill="#e4823e"/><rect x="341" y="84" width="1" height="9.2" fill="#f8a860"/><rect x="342" y="84" width="1" height="9.2" fill="#dc7a3c"/><rect x="346" y="86.3" width="1" height="33.9" fill="#e08650"/><rect x="345" y="86.7" width="1" height="32.7" fill="#d87c50"/><rect x="347" y="86.7" width="1" height="32.7" fill="#d87c50"/><rect x="346" y="86.7" width="1" height="1" fill="#d87c50"/><rect x="346" y="118.4" width="1" height="1" fill="#d87c50"/><rect x="346" y="87.7" width="1" height="30.7" fill="#5e2e1a"/><rect x="350" y="106.3" width="1" height="14.7" fill="#e08650"/><rect x="349" y="116.3" width="1" height="2.4" fill="#e4823e"/><rect x="350" y="116.3" width="1" height="2.4" fill="#f8a860"/><rect x="351" y="116.3" width="1" height="2.4" fill="#dc7a3c"/><rect x="355" y="89.4" width="1" height="30" fill="#e08650"/><rect x="354" y="93.2" width="1" height="17.8" fill="#e4823e"/><rect x="355" y="93.2" width="1" height="17.8" fill="#f8a860"/><rect x="356" y="93.2" width="1" height="17.8" fill="#dc7a3c"/><rect x="359" y="76.2" width="1" height="18.6" fill="#e08650"/><rect x="358" y="79.3" width="1" height="12.4" fill="#e4823e"/><rect x="359" y="79.3" width="1" height="12.4" fill="#f8a860"/><rect x="360" y="79.3" width="1" height="12.4" fill="#dc7a3c"/><rect x="363" y="74" width="1" height="36.2" fill="#e08650"/><rect x="362" y="77.8" width="1" height="31.6" fill="#d87c50"/><rect x="364" y="77.8" width="1" height="31.6" fill="#d87c50"/><rect x="363" y="77.8" width="1" height="1" fill="#d87c50"/><rect x="363" y="108.4" width="1" height="1" fill="#d87c50"/><rect x="363" y="78.8" width="1" height="29.6" fill="#5e2e1a"/><rect x="368" y="104" width="1" height="15.4" fill="#e08650"/><rect x="367" y="111.7" width="1" height="2" fill="#e4823e"/><rect x="368" y="111.7" width="1" height="2" fill="#f8a860"/><rect x="369" y="111.7" width="1" height="2" fill="#dc7a3c"/><rect x="372" y="105.6" width="1" height="13.8" fill="#e08650"/><rect x="371" y="111" width="1" height="2" fill="#e4823e"/><rect x="372" y="111" width="1" height="2" fill="#f8a860"/><rect x="373" y="111" width="1" height="2" fill="#dc7a3c"/><rect x="377" y="94" width="1" height="16.2" fill="#e08650"/><rect x="376" y="101.7" width="1" height="7.7" fill="#e4823e"/><rect x="377" y="101.7" width="1" height="7.7" fill="#f8a860"/><rect x="378" y="101.7" width="1" height="7.7" fill="#dc7a3c"/><rect x="381" y="93.2" width="1" height="17" fill="#e08650"/><rect x="380" y="97.8" width="1" height="2.4" fill="#e4823e"/><rect x="381" y="97.8" width="1" height="2.4" fill="#f8a860"/><rect x="382" y="97.8" width="1" height="2.4" fill="#dc7a3c"/><rect x="386" y="86.3" width="1" height="17" fill="#e08650"/><rect x="385" y="97.1" width="1" height="2" fill="#e4823e"/><rect x="386" y="97.1" width="1" height="2" fill="#f8a860"/><rect x="387" y="97.1" width="1" height="2" fill="#dc7a3c"/><rect x="390" y="81.7" width="1" height="29.3" fill="#e08650"/><rect x="389" y="86.3" width="1" height="10.8" fill="#e4823e"/><rect x="390" y="86.3" width="1" height="10.8" fill="#f8a860"/><rect x="391" y="86.3" width="1" height="10.8" fill="#dc7a3c"/><rect x="395" y="76.3" width="1" height="12.3" fill="#e08650"/><rect x="394" y="84.8" width="1" height="2" fill="#e4823e"/><rect x="395" y="84.8" width="1" height="2" fill="#f8a860"/><rect x="396" y="84.8" width="1" height="2" fill="#dc7a3c"/><rect x="399" y="62.4" width="1" height="27" fill="#e08650"/><rect x="398" y="76.3" width="1" height="8.5" fill="#e4823e"/><rect x="399" y="76.3" width="1" height="8.5" fill="#f8a860"/><rect x="400" y="76.3" width="1" height="8.5" fill="#dc7a3c"/><rect x="404" y="69.3" width="1" height="27" fill="#e08650"/><rect x="403" y="75.5" width="1" height="10.8" fill="#d87c50"/><rect x="405" y="75.5" width="1" height="10.8" fill="#d87c50"/><rect x="404" y="75.5" width="1" height="1" fill="#d87c50"/><rect x="404" y="85.3" width="1" height="1" fill="#d87c50"/><rect x="404" y="76.5" width="1" height="8.8" fill="#5e2e1a"/><rect x="408" y="49.3" width="1" height="37" fill="#e08650"/><rect x="407" y="66.2" width="1" height="19.3" fill="#e4823e"/><rect x="408" y="66.2" width="1" height="19.3" fill="#f8a860"/><rect x="409" y="66.2" width="1" height="19.3" fill="#dc7a3c"/><rect x="413" y="48.5" width="1" height="20" fill="#e08650"/><rect x="412" y="56.2" width="1" height="7.7" fill="#e4823e"/><rect x="413" y="56.2" width="1" height="7.7" fill="#f8a860"/><rect x="414" y="56.2" width="1" height="7.7" fill="#dc7a3c"/><rect x="417" y="51.6" width="1" height="51.7" fill="#e08650"/><rect x="416" y="54.7" width="1" height="32.3" fill="#d87c50"/><rect x="418" y="54.7" width="1" height="32.3" fill="#d87c50"/><rect x="417" y="54.7" width="1" height="1" fill="#d87c50"/><rect x="417" y="86" width="1" height="1" fill="#d87c50"/><rect x="417" y="55.7" width="1" height="30.3" fill="#5e2e1a"/><rect x="422" y="53.9" width="1" height="37.1" fill="#e08650"/><rect x="421" y="65.5" width="1" height="23.9" fill="#e4823e"/><rect x="422" y="65.5" width="1" height="23.9" fill="#f8a860"/><rect x="423" y="65.5" width="1" height="23.9" fill="#dc7a3c"/><rect x="426" y="51.6" width="1" height="17.7" fill="#e08650"/><rect x="425" y="61.6" width="1" height="2.3" fill="#e4823e"/><rect x="426" y="61.6" width="1" height="2.3" fill="#f8a860"/><rect x="427" y="61.6" width="1" height="2.3" fill="#dc7a3c"/><rect x="431" y="55.4" width="1" height="13.9" fill="#e08650"/><rect x="430" y="60" width="1" height="5.5" fill="#d87c50"/><rect x="432" y="60" width="1" height="5.5" fill="#d87c50"/><rect x="431" y="60" width="1" height="1" fill="#d87c50"/><rect x="431" y="64.5" width="1" height="1" fill="#d87c50"/><rect x="431" y="61" width="1" height="3.5" fill="#5e2e1a"/><rect x="435" y="63.1" width="1" height="21.7" fill="#e08650"/><rect x="434" y="65.5" width="1" height="19.3" fill="#d87c50"/><rect x="436" y="65.5" width="1" height="19.3" fill="#d87c50"/><rect x="435" y="65.5" width="1" height="1" fill="#d87c50"/><rect x="435" y="83.8" width="1" height="1" fill="#d87c50"/><rect x="435" y="66.5" width="1" height="17.3" fill="#5e2e1a"/><rect x="439" y="82.4" width="1" height="34" fill="#e08650"/><rect x="438" y="84.8" width="1" height="16.2" fill="#d87c50"/><rect x="440" y="84.8" width="1" height="16.2" fill="#d87c50"/><rect x="439" y="84.8" width="1" height="1" fill="#d87c50"/><rect x="439" y="100" width="1" height="1" fill="#d87c50"/><rect x="439" y="85.8" width="1" height="14.2" fill="#5e2e1a"/><rect x="444" y="91.7" width="1" height="23.1" fill="#e08650"/><rect x="443" y="101.7" width="1" height="2.3" fill="#e4823e"/><rect x="444" y="101.7" width="1" height="2.3" fill="#f8a860"/><rect x="445" y="101.7" width="1" height="2.3" fill="#dc7a3c"/><rect x="448" y="93.2" width="1" height="19.3" fill="#e08650"/><rect x="453" y="94.8" width="1" height="15.4" fill="#e08650"/><rect x="452" y="103.3" width="1" height="2" fill="#e4823e"/><rect x="453" y="103.3" width="1" height="2" fill="#f8a860"/><rect x="454" y="103.3" width="1" height="2" fill="#dc7a3c"/><rect x="457" y="101.7" width="1" height="23.9" fill="#e08650"/><rect x="456" y="106.4" width="1" height="2" fill="#e4823e"/><rect x="457" y="106.4" width="1" height="2" fill="#f8a860"/><rect x="458" y="106.4" width="1" height="2" fill="#dc7a3c"/><rect x="462" y="99.4" width="1" height="37.8" fill="#e08650"/><rect x="461" y="105.6" width="1" height="23.9" fill="#d87c50"/><rect x="463" y="105.6" width="1" height="23.9" fill="#d87c50"/><rect x="462" y="105.6" width="1" height="1" fill="#d87c50"/><rect x="462" y="128.5" width="1" height="1" fill="#d87c50"/><rect x="462" y="106.6" width="1" height="21.9" fill="#5e2e1a"/><rect x="466" y="110.2" width="1" height="23.9" fill="#e08650"/><rect x="465" y="114" width="1" height="15.5" fill="#e4823e"/><rect x="466" y="114" width="1" height="15.5" fill="#f8a860"/><rect x="467" y="114" width="1" height="15.5" fill="#dc7a3c"/><rect x="471" y="90.2" width="1" height="41.6" fill="#e08650"/><rect x="475" y="110" width="1" height="41" fill="#e08650"/><rect x="474" y="111.6" width="1" height="38.6" fill="#d87c50"/><rect x="476" y="111.6" width="1" height="38.6" fill="#d87c50"/><rect x="475" y="111.6" width="1" height="1" fill="#d87c50"/><rect x="475" y="149.2" width="1" height="1" fill="#d87c50"/><rect x="475" y="112.6" width="1" height="36.6" fill="#5e2e1a"/><rect x="480" y="127.8" width="1" height="30.1" fill="#e08650"/><rect x="479" y="128.6" width="1" height="24.7" fill="#d87c50"/><rect x="481" y="128.6" width="1" height="24.7" fill="#d87c50"/><rect x="480" y="128.6" width="1" height="1" fill="#d87c50"/><rect x="480" y="152.3" width="1" height="1" fill="#d87c50"/><rect x="480" y="129.6" width="1" height="22.7" fill="#5e2e1a"/><rect x="484" y="149.4" width="1" height="17.8" fill="#e08650"/><rect x="483" y="151.7" width="1" height="10.8" fill="#d87c50"/><rect x="485" y="151.7" width="1" height="10.8" fill="#d87c50"/><rect x="484" y="151.7" width="1" height="1" fill="#d87c50"/><rect x="484" y="161.5" width="1" height="1" fill="#d87c50"/><rect x="484" y="152.7" width="1" height="8.8" fill="#5e2e1a"/><rect x="489" y="144" width="1" height="20.8" fill="#e08650"/><rect x="488" y="152.5" width="1" height="9.3" fill="#e4823e"/><rect x="489" y="152.5" width="1" height="9.3" fill="#f8a860"/><rect x="490" y="152.5" width="1" height="9.3" fill="#dc7a3c"/><rect x="493" y="147.9" width="1" height="27.7" fill="#e08650"/><rect x="492" y="151" width="1" height="16.2" fill="#d87c50"/><rect x="494" y="151" width="1" height="16.2" fill="#d87c50"/><rect x="493" y="151" width="1" height="1" fill="#d87c50"/><rect x="493" y="166.2" width="1" height="1" fill="#d87c50"/><rect x="493" y="152" width="1" height="14.2" fill="#5e2e1a"/><rect x="498" y="162.2" width="1" height="27.8" fill="#e08650"/><rect x="497" y="165.6" width="1" height="2" fill="#e4823e"/><rect x="498" y="165.6" width="1" height="2" fill="#f8a860"/><rect x="499" y="165.6" width="1" height="2" fill="#dc7a3c"/><rect x="502" y="160.2" width="1" height="16.2" fill="#e08650"/><rect x="501" y="164.8" width="1" height="10.8" fill="#d87c50"/><rect x="503" y="164.8" width="1" height="10.8" fill="#d87c50"/><rect x="502" y="164.8" width="1" height="1" fill="#d87c50"/><rect x="502" y="174.6" width="1" height="1" fill="#d87c50"/><rect x="502" y="165.8" width="1" height="8.8" fill="#5e2e1a"/><rect x="507" y="167.2" width="1" height="12.3" fill="#e08650"/><rect x="506" y="172.6" width="1" height="2" fill="#e4823e"/><rect x="507" y="172.6" width="1" height="2" fill="#f8a860"/><rect x="508" y="172.6" width="1" height="2" fill="#dc7a3c"/><rect x="511" y="167.2" width="1" height="18.5" fill="#e08650"/><rect x="510" y="171" width="1" height="13.1" fill="#d87c50"/><rect x="512" y="171" width="1" height="13.1" fill="#d87c50"/><rect x="511" y="171" width="1" height="1" fill="#d87c50"/><rect x="511" y="183.1" width="1" height="1" fill="#d87c50"/><rect x="511" y="172" width="1" height="11.1" fill="#5e2e1a"/><rect x="515" y="159.4" width="1" height="24.7" fill="#e08650"/><rect x="514" y="178" width="1" height="3" fill="#e4823e"/><rect x="515" y="178" width="1" height="3" fill="#f8a860"/><rect x="516" y="178" width="1" height="3" fill="#dc7a3c"/><rect x="520" y="157.1" width="1" height="26.3" fill="#e08650"/><rect x="519" y="174.9" width="1" height="2" fill="#e4823e"/><rect x="520" y="174.9" width="1" height="2" fill="#f8a860"/><rect x="521" y="174.9" width="1" height="2" fill="#dc7a3c"/><rect x="524" y="164" width="1" height="22.8" fill="#e08650"/><rect x="523" y="166" width="1" height="7.3" fill="#e4823e"/><rect x="524" y="166" width="1" height="7.3" fill="#f8a860"/><rect x="525" y="166" width="1" height="7.3" fill="#dc7a3c"/><rect x="529" y="139.4" width="1" height="29.3" fill="#e08650"/><rect x="528" y="141.7" width="1" height="23.9" fill="#e4823e"/><rect x="529" y="141.7" width="1" height="23.9" fill="#f8a860"/><rect x="530" y="141.7" width="1" height="23.9" fill="#dc7a3c"/><rect x="533" y="133.2" width="1" height="13.1" fill="#e08650"/><rect x="532" y="139.5" width="1" height="2" fill="#e4823e"/><rect x="533" y="139.5" width="1" height="2" fill="#f8a860"/><rect x="534" y="139.5" width="1" height="2" fill="#dc7a3c"/><rect x="538" y="131.7" width="1" height="10.8" fill="#e08650"/><rect x="537" y="138.9" width="1" height="2" fill="#e4823e"/><rect x="538" y="138.9" width="1" height="2" fill="#f8a860"/><rect x="539" y="138.9" width="1" height="2" fill="#dc7a3c"/><rect x="542" y="129.4" width="1" height="23.9" fill="#e08650"/><rect x="541" y="139.4" width="1" height="12.3" fill="#d87c50"/><rect x="543" y="139.4" width="1" height="12.3" fill="#d87c50"/><rect x="542" y="139.4" width="1" height="1" fill="#d87c50"/><rect x="542" y="150.7" width="1" height="1" fill="#d87c50"/><rect x="542" y="140.4" width="1" height="10.3" fill="#5e2e1a"/><rect x="547" y="148.6" width="1" height="21.6" fill="#e08650"/><rect x="546" y="150.2" width="1" height="12.3" fill="#d87c50"/><rect x="548" y="150.2" width="1" height="12.3" fill="#d87c50"/><rect x="547" y="150.2" width="1" height="1" fill="#d87c50"/><rect x="547" y="161.5" width="1" height="1" fill="#d87c50"/><rect x="547" y="151.2" width="1" height="10.3" fill="#5e2e1a"/><rect x="551" y="156.4" width="1" height="21.6" fill="#e08650"/><rect x="550" y="161.8" width="1" height="10.8" fill="#d87c50"/><rect x="552" y="161.8" width="1" height="10.8" fill="#d87c50"/><rect x="551" y="161.8" width="1" height="1" fill="#d87c50"/><rect x="551" y="171.6" width="1" height="1" fill="#d87c50"/><rect x="551" y="162.8" width="1" height="8.8" fill="#5e2e1a"/><rect x="556" y="160.2" width="1" height="24.7" fill="#e08650"/><rect x="555" y="171.8" width="1" height="2" fill="#e4823e"/><rect x="556" y="171.8" width="1" height="2" fill="#f8a860"/><rect x="557" y="171.8" width="1" height="2" fill="#dc7a3c"/><rect x="560" y="162.4" width="1" height="13.1" fill="#e08650"/><rect x="559" y="167" width="1" height="6.2" fill="#e4823e"/><rect x="560" y="167" width="1" height="6.2" fill="#f8a860"/><rect x="561" y="167" width="1" height="6.2" fill="#dc7a3c"/><rect x="565" y="162.4" width="1" height="23.9" fill="#e08650"/><rect x="564" y="167" width="1" height="10" fill="#d87c50"/><rect x="566" y="167" width="1" height="10" fill="#d87c50"/><rect x="565" y="167" width="1" height="1" fill="#d87c50"/><rect x="565" y="176" width="1" height="1" fill="#d87c50"/><rect x="565" y="168" width="1" height="8" fill="#5e2e1a"/><rect x="569" y="167" width="1" height="20" fill="#e08650"/><rect x="568" y="173.2" width="1" height="3.8" fill="#e4823e"/><rect x="569" y="173.2" width="1" height="3.8" fill="#f8a860"/><rect x="570" y="173.2" width="1" height="3.8" fill="#dc7a3c"/><rect x="574" y="164" width="1" height="28.5" fill="#e08650"/><rect x="573" y="172.4" width="1" height="17.8" fill="#d87c50"/><rect x="575" y="172.4" width="1" height="17.8" fill="#d87c50"/><rect x="574" y="172.4" width="1" height="1" fill="#d87c50"/><rect x="574" y="189.2" width="1" height="1" fill="#d87c50"/><rect x="574" y="173.4" width="1" height="15.8" fill="#5e2e1a"/><rect x="578" y="170" width="1" height="33.3" fill="#e08650"/><rect x="577" y="175.5" width="1" height="13.1" fill="#e4823e"/><rect x="578" y="175.5" width="1" height="13.1" fill="#f8a860"/><rect x="579" y="175.5" width="1" height="13.1" fill="#dc7a3c"/><rect x="582" y="158.5" width="1" height="20.9" fill="#e08650"/><rect x="581" y="167.8" width="1" height="6.2" fill="#e4823e"/><rect x="582" y="167.8" width="1" height="6.2" fill="#f8a860"/><rect x="583" y="167.8" width="1" height="6.2" fill="#dc7a3c"/><rect x="587" y="165.5" width="1" height="12.3" fill="#e08650"/><rect x="586" y="167" width="1" height="9.3" fill="#d87c50"/><rect x="588" y="167" width="1" height="9.3" fill="#d87c50"/><rect x="587" y="167" width="1" height="1" fill="#d87c50"/><rect x="587" y="175.3" width="1" height="1" fill="#d87c50"/><rect x="587" y="168" width="1" height="7.3" fill="#5e2e1a"/><rect x="591" y="170.9" width="1" height="11.5" fill="#e08650"/><rect x="590" y="174" width="1" height="4.6" fill="#d87c50"/><rect x="592" y="174" width="1" height="4.6" fill="#d87c50"/><rect x="591" y="174" width="1" height="1" fill="#d87c50"/><rect x="591" y="177.6" width="1" height="1" fill="#d87c50"/><rect x="591" y="175" width="1" height="2.6" fill="#5e2e1a"/><rect x="596" y="177" width="1" height="20.9" fill="#e08650"/><rect x="595" y="177.8" width="1" height="11.6" fill="#d87c50"/><rect x="597" y="177.8" width="1" height="11.6" fill="#d87c50"/><rect x="596" y="177.8" width="1" height="1" fill="#d87c50"/><rect x="596" y="188.4" width="1" height="1" fill="#d87c50"/><rect x="596" y="178.8" width="1" height="9.6" fill="#5e2e1a"/><rect x="600" y="179.4" width="1" height="20" fill="#e08650"/><rect x="599" y="189.4" width="1" height="6.2" fill="#d87c50"/><rect x="601" y="189.4" width="1" height="6.2" fill="#d87c50"/><rect x="600" y="189.4" width="1" height="1" fill="#d87c50"/><rect x="600" y="194.6" width="1" height="1" fill="#d87c50"/><rect x="600" y="190.4" width="1" height="4.2" fill="#5e2e1a"/><rect x="605" y="187" width="1" height="34" fill="#e08650"/><rect x="604" y="194.8" width="1" height="16.2" fill="#d87c50"/><rect x="606" y="194.8" width="1" height="16.2" fill="#d87c50"/><rect x="605" y="194.8" width="1" height="1" fill="#d87c50"/><rect x="605" y="210" width="1" height="1" fill="#d87c50"/><rect x="605" y="195.8" width="1" height="14.2" fill="#5e2e1a"/><rect x="609" y="207.9" width="1" height="17" fill="#e08650"/><rect x="608" y="211" width="1" height="13" fill="#d87c50"/><rect x="610" y="211" width="1" height="13" fill="#d87c50"/><rect x="609" y="211" width="1" height="1" fill="#d87c50"/><rect x="609" y="223" width="1" height="1" fill="#d87c50"/><rect x="609" y="212" width="1" height="11" fill="#5e2e1a"/><rect x="614" y="220.2" width="1" height="13.2" fill="#e08650"/><rect x="613" y="223.5" width="1" height="2" fill="#e4823e"/><rect x="614" y="223.5" width="1" height="2" fill="#f8a860"/><rect x="615" y="223.5" width="1" height="2" fill="#dc7a3c"/><rect x="618" y="217.2" width="1" height="14.6" fill="#e08650"/><rect x="617" y="224.9" width="1" height="3.8" fill="#e4823e"/><rect x="618" y="224.9" width="1" height="3.8" fill="#f8a860"/><rect x="619" y="224.9" width="1" height="3.8" fill="#dc7a3c"/><rect x="623" y="215.6" width="1" height="16.2" fill="#e08650"/><rect x="622" y="228" width="1" height="2" fill="#e4823e"/><rect x="623" y="228" width="1" height="2" fill="#f8a860"/><rect x="624" y="228" width="1" height="2" fill="#dc7a3c"/><rect x="627" y="224.1" width="1" height="14.7" fill="#e08650"/><rect x="626" y="228" width="1" height="9.2" fill="#d87c50"/><rect x="628" y="228" width="1" height="9.2" fill="#d87c50"/><rect x="627" y="228" width="1" height="1" fill="#d87c50"/><rect x="627" y="236.2" width="1" height="1" fill="#d87c50"/><rect x="627" y="229" width="1" height="7.2" fill="#5e2e1a"/><rect x="632" y="220.2" width="1" height="18.6" fill="#e08650"/><rect x="631" y="224.9" width="1" height="11.5" fill="#e4823e"/><rect x="632" y="224.9" width="1" height="11.5" fill="#f8a860"/><rect x="633" y="224.9" width="1" height="11.5" fill="#dc7a3c"/><rect x="636" y="218.7" width="1" height="10" fill="#e08650"/><rect x="635" y="223.5" width="1" height="2" fill="#e4823e"/><rect x="636" y="223.5" width="1" height="2" fill="#f8a860"/><rect x="637" y="223.5" width="1" height="2" fill="#dc7a3c"/><rect x="641" y="211.8" width="1" height="15.4" fill="#e08650"/><rect x="640" y="219.5" width="1" height="2.3" fill="#e4823e"/><rect x="641" y="219.5" width="1" height="2.3" fill="#f8a860"/><rect x="642" y="219.5" width="1" height="2.3" fill="#dc7a3c"/><rect x="645" y="207.9" width="1" height="10.8" fill="#e08650"/><rect x="644" y="213.3" width="1" height="3.9" fill="#e4823e"/><rect x="645" y="213.3" width="1" height="3.9" fill="#f8a860"/><rect x="646" y="213.3" width="1" height="3.9" fill="#dc7a3c"/><rect x="650" y="194.8" width="1" height="25.4" fill="#e08650"/><rect x="649" y="204.8" width="1" height="6.2" fill="#e4823e"/><rect x="650" y="204.8" width="1" height="6.2" fill="#f8a860"/><rect x="651" y="204.8" width="1" height="6.2" fill="#dc7a3c"/><rect x="654" y="184" width="1" height="23.9" fill="#e08650"/><rect x="653" y="193.2" width="1" height="8.5" fill="#e4823e"/><rect x="654" y="193.2" width="1" height="8.5" fill="#f8a860"/><rect x="655" y="193.2" width="1" height="8.5" fill="#dc7a3c"/><rect x="658" y="179.4" width="1" height="21.6" fill="#e08650"/><rect x="657" y="191.7" width="1" height="2.3" fill="#e4823e"/><rect x="658" y="191.7" width="1" height="2.3" fill="#f8a860"/><rect x="659" y="191.7" width="1" height="2.3" fill="#dc7a3c"/><rect x="663" y="189.4" width="1" height="9.3" fill="#e08650"/><rect x="662" y="192.5" width="1" height="2" fill="#e4823e"/><rect x="663" y="192.5" width="1" height="2" fill="#f8a860"/><rect x="664" y="192.5" width="1" height="2" fill="#dc7a3c"/><rect x="667" y="178.6" width="1" height="16.2" fill="#e08650"/><rect x="666" y="183.2" width="1" height="8.5" fill="#e4823e"/><rect x="667" y="183.2" width="1" height="8.5" fill="#f8a860"/><rect x="668" y="183.2" width="1" height="8.5" fill="#dc7a3c"/><rect x="672" y="176.3" width="1" height="12.3" fill="#e08650"/><rect x="671" y="181.5" width="1" height="2" fill="#e4823e"/><rect x="672" y="181.5" width="1" height="2" fill="#f8a860"/><rect x="673" y="181.5" width="1" height="2" fill="#dc7a3c"/><rect x="676" y="170" width="1" height="21" fill="#e08650"/><rect x="675" y="183.2" width="1" height="3.1" fill="#e4823e"/><rect x="676" y="183.2" width="1" height="3.1" fill="#f8a860"/><rect x="677" y="183.2" width="1" height="3.1" fill="#dc7a3c"/><rect x="681" y="184" width="1" height="29.3" fill="#e08650"/><rect x="680" y="186.3" width="1" height="24.7" fill="#d87c50"/><rect x="682" y="186.3" width="1" height="24.7" fill="#d87c50"/><rect x="681" y="186.3" width="1" height="1" fill="#d87c50"/><rect x="681" y="210" width="1" height="1" fill="#d87c50"/><rect x="681" y="187.3" width="1" height="22.7" fill="#5e2e1a"/><rect x="685" y="196.4" width="1" height="27.6" fill="#e08650"/><rect x="684" y="204.8" width="1" height="5.4" fill="#e4823e"/><rect x="685" y="204.8" width="1" height="5.4" fill="#f8a860"/><rect x="686" y="204.8" width="1" height="5.4" fill="#dc7a3c"/><rect x="690" y="200.2" width="1" height="10" fill="#e08650"/><rect x="689" y="203.3" width="1" height="2.3" fill="#e4823e"/><rect x="690" y="203.3" width="1" height="2.3" fill="#f8a860"/><rect x="691" y="203.3" width="1" height="2.3" fill="#dc7a3c"/><rect x="694" y="195.6" width="1" height="12.4" fill="#e08650"/><rect x="693" y="200.2" width="1" height="4.6" fill="#e4823e"/><rect x="694" y="200.2" width="1" height="4.6" fill="#f8a860"/><rect x="695" y="200.2" width="1" height="4.6" fill="#dc7a3c"/><rect x="699" y="186.3" width="1" height="13.9" fill="#e08650"/><rect x="698" y="191.7" width="1" height="6.2" fill="#e4823e"/><rect x="699" y="191.7" width="1" height="6.2" fill="#f8a860"/><rect x="700" y="191.7" width="1" height="6.2" fill="#dc7a3c"/><rect x="703" y="183.2" width="1" height="17.8" fill="#e08650"/><rect x="702" y="187.9" width="1" height="2" fill="#e4823e"/><rect x="703" y="187.9" width="1" height="2" fill="#f8a860"/><rect x="704" y="187.9" width="1" height="2" fill="#dc7a3c"/><rect x="708" y="173.2" width="1" height="19.3" fill="#e08650"/><rect x="707" y="182.5" width="1" height="6.1" fill="#e4823e"/><rect x="708" y="182.5" width="1" height="6.1" fill="#f8a860"/><rect x="709" y="182.5" width="1" height="6.1" fill="#dc7a3c"/><rect x="712" y="160" width="1" height="26.3" fill="#e08650"/><rect x="711" y="181.7" width="1" height="2" fill="#e4823e"/><rect x="712" y="181.7" width="1" height="2" fill="#f8a860"/><rect x="713" y="181.7" width="1" height="2" fill="#dc7a3c"/><rect x="717" y="163.2" width="1" height="23.1" fill="#e08650"/><rect x="716" y="166.3" width="1" height="13.9" fill="#e4823e"/><rect x="717" y="166.3" width="1" height="13.9" fill="#f8a860"/><rect x="718" y="166.3" width="1" height="13.9" fill="#dc7a3c"/><rect x="721" y="158.5" width="1" height="12.5" fill="#e08650"/><rect x="726" y="158.5" width="1" height="12.5" fill="#e08650"/><rect x="725" y="162.5" width="1" height="2" fill="#e4823e"/><rect x="726" y="162.5" width="1" height="2" fill="#f8a860"/><rect x="727" y="162.5" width="1" height="2" fill="#dc7a3c"/><rect x="730" y="154.7" width="1" height="22.3" fill="#e08650"/><rect x="729" y="158.5" width="1" height="2.4" fill="#e4823e"/><rect x="730" y="158.5" width="1" height="2.4" fill="#f8a860"/><rect x="731" y="158.5" width="1" height="2.4" fill="#dc7a3c"/><rect x="734" y="150" width="1" height="22.4" fill="#e08650"/><rect x="733" y="157" width="1" height="12.4" fill="#d87c50"/><rect x="735" y="157" width="1" height="12.4" fill="#d87c50"/><rect x="734" y="157" width="1" height="1" fill="#d87c50"/><rect x="734" y="168.4" width="1" height="1" fill="#d87c50"/><rect x="734" y="158" width="1" height="10.4" fill="#5e2e1a"/><rect x="739" y="153.1" width="1" height="21.7" fill="#e08650"/><rect x="738" y="161.6" width="1" height="7.8" fill="#e4823e"/><rect x="739" y="161.6" width="1" height="7.8" fill="#f8a860"/><rect x="740" y="161.6" width="1" height="7.8" fill="#dc7a3c"/><rect x="743" y="157.8" width="1" height="12.2" fill="#e08650"/><rect x="742" y="160.9" width="1" height="8.5" fill="#d87c50"/><rect x="744" y="160.9" width="1" height="8.5" fill="#d87c50"/><rect x="743" y="160.9" width="1" height="1" fill="#d87c50"/><rect x="743" y="168.4" width="1" height="1" fill="#d87c50"/><rect x="743" y="161.9" width="1" height="6.5" fill="#5e2e1a"/><rect x="748" y="160" width="1" height="7.8" fill="#e08650"/><rect x="747" y="164" width="1" height="2" fill="#e4823e"/><rect x="748" y="164" width="1" height="2" fill="#f8a860"/><rect x="749" y="164" width="1" height="2" fill="#dc7a3c"/><rect x="752" y="156.2" width="1" height="15.5" fill="#e08650"/><rect x="751" y="160.9" width="1" height="3.8" fill="#e4823e"/><rect x="752" y="160.9" width="1" height="3.8" fill="#f8a860"/><rect x="753" y="160.9" width="1" height="3.8" fill="#dc7a3c"/><rect x="757" y="154.7" width="1" height="11.5" fill="#e08650"/><rect x="756" y="160" width="1" height="2.4" fill="#e4823e"/><rect x="757" y="160" width="1" height="2.4" fill="#f8a860"/><rect x="758" y="160" width="1" height="2.4" fill="#dc7a3c"/><rect x="761" y="160" width="1" height="24.8" fill="#e08650"/><rect x="760" y="161.6" width="1" height="13.1" fill="#d87c50"/><rect x="762" y="161.6" width="1" height="13.1" fill="#d87c50"/><rect x="761" y="161.6" width="1" height="1" fill="#d87c50"/><rect x="761" y="173.7" width="1" height="1" fill="#d87c50"/><rect x="761" y="162.6" width="1" height="11.1" fill="#5e2e1a"/><rect x="766" y="173.2" width="1" height="26.2" fill="#e08650"/><rect x="765" y="174" width="1" height="12.3" fill="#d87c50"/><rect x="767" y="174" width="1" height="12.3" fill="#d87c50"/><rect x="766" y="174" width="1" height="1" fill="#d87c50"/><rect x="766" y="185.3" width="1" height="1" fill="#d87c50"/><rect x="766" y="175" width="1" height="10.3" fill="#5e2e1a"/><rect x="770" y="178.6" width="1" height="8.4" fill="#e08650"/><rect x="769" y="183.2" width="1" height="3.1" fill="#e4823e"/><rect x="770" y="183.2" width="1" height="3.1" fill="#f8a860"/><rect x="771" y="183.2" width="1" height="3.1" fill="#dc7a3c"/><rect x="775" y="179.4" width="1" height="11.6" fill="#e08650"/><rect x="774" y="181" width="1" height="6.8" fill="#d87c50"/><rect x="776" y="181" width="1" height="6.8" fill="#d87c50"/><rect x="775" y="181" width="1" height="1" fill="#d87c50"/><rect x="775" y="186.8" width="1" height="1" fill="#d87c50"/><rect x="775" y="182" width="1" height="4.8" fill="#5e2e1a"/><rect x="779" y="180.9" width="1" height="11.6" fill="#e08650"/><rect x="778" y="187" width="1" height="3" fill="#e4823e"/><rect x="779" y="187" width="1" height="3" fill="#f8a860"/><rect x="780" y="187" width="1" height="3" fill="#dc7a3c"/><rect x="784" y="181.7" width="1" height="23.1" fill="#e08650"/><rect x="783" y="185.5" width="1" height="3.9" fill="#e4823e"/><rect x="784" y="185.5" width="1" height="3.9" fill="#f8a860"/><rect x="785" y="185.5" width="1" height="3.9" fill="#dc7a3c"/><rect x="788" y="176.3" width="1" height="19.3" fill="#e08650"/><rect x="787" y="180.9" width="1" height="2.3" fill="#e4823e"/><rect x="788" y="180.9" width="1" height="2.3" fill="#f8a860"/><rect x="789" y="180.9" width="1" height="2.3" fill="#dc7a3c"/><rect x="793" y="159.3" width="1" height="25.5" fill="#e08650"/><rect x="797" y="164.7" width="1" height="13.9" fill="#e08650"/><rect x="796" y="167" width="1" height="10.8" fill="#e4823e"/><rect x="797" y="167" width="1" height="10.8" fill="#f8a860"/><rect x="798" y="167" width="1" height="10.8" fill="#dc7a3c"/><rect x="802" y="163.1" width="1" height="8.5" fill="#e08650"/><rect x="801" y="167" width="1" height="2.3" fill="#e4823e"/><rect x="802" y="167" width="1" height="2.3" fill="#f8a860"/><rect x="803" y="167" width="1" height="2.3" fill="#dc7a3c"/><rect x="806" y="164.7" width="1" height="10" fill="#e08650"/><rect x="805" y="169.3" width="1" height="3.1" fill="#e4823e"/><rect x="806" y="169.3" width="1" height="3.1" fill="#f8a860"/><rect x="807" y="169.3" width="1" height="3.1" fill="#dc7a3c"/><rect x="810" y="165.5" width="1" height="16.2" fill="#e08650"/><rect x="809" y="171.6" width="1" height="5.4" fill="#d87c50"/><rect x="811" y="171.6" width="1" height="5.4" fill="#d87c50"/><rect x="810" y="171.6" width="1" height="1" fill="#d87c50"/><rect x="810" y="176" width="1" height="1" fill="#d87c50"/><rect x="810" y="172.6" width="1" height="3.4" fill="#5e2e1a"/><rect x="815" y="176.3" width="1" height="30.1" fill="#e08650"/><rect x="814" y="177.8" width="1" height="28.6" fill="#d87c50"/><rect x="816" y="177.8" width="1" height="28.6" fill="#d87c50"/><rect x="815" y="177.8" width="1" height="1" fill="#d87c50"/><rect x="815" y="205.4" width="1" height="1" fill="#d87c50"/><rect x="815" y="178.8" width="1" height="26.6" fill="#5e2e1a"/><rect x="819" y="196.3" width="1" height="40.7" fill="#e08650"/><rect x="818" y="205.6" width="1" height="3.8" fill="#e4823e"/><rect x="819" y="205.6" width="1" height="3.8" fill="#f8a860"/><rect x="820" y="205.6" width="1" height="3.8" fill="#dc7a3c"/><rect x="824" y="189.4" width="1" height="25.4" fill="#e08650"/><rect x="828" y="198.6" width="1" height="22.4" fill="#e08650"/><rect x="827" y="207.1" width="1" height="10.1" fill="#d87c50"/><rect x="829" y="207.1" width="1" height="10.1" fill="#d87c50"/><rect x="828" y="207.1" width="1" height="1" fill="#d87c50"/><rect x="828" y="216.2" width="1" height="1" fill="#d87c50"/><rect x="828" y="208.1" width="1" height="8.1" fill="#5e2e1a"/><rect x="833" y="204" width="1" height="14.7" fill="#e08650"/><rect x="832" y="210.2" width="1" height="7" fill="#e4823e"/><rect x="833" y="210.2" width="1" height="7" fill="#f8a860"/><rect x="834" y="210.2" width="1" height="7" fill="#dc7a3c"/></g></g><g clip-path="url(#cmacd)"><g><rect x="14" y="286.6" width="2" height="1.9" fill="#9c2434"/><rect x="18" y="287" width="2" height="1.5" fill="#9c2434"/><rect x="23" y="287.6" width="2" height="0.9" fill="#9c2434"/><rect x="54" y="287.4" width="2" height="1.1" fill="#9c2434"/><rect x="59" y="287.3" width="2" height="1.2" fill="#9c2434"/><rect x="72" y="288.5" width="2" height="0.9" fill="#9c2434"/><rect x="76" y="288.5" width="2" height="0.9" fill="#9c2434"/><rect x="90" y="286.6" width="2" height="1.9" fill="#9c2434"/><rect x="94" y="285.4" width="2" height="3.1" fill="#9c2434"/><rect x="99" y="284.7" width="2" height="3.8" fill="#9c2434"/><rect x="103" y="286.2" width="2" height="2.3" fill="#9c2434"/><rect x="108" y="286.8" width="2" height="1.7" fill="#9c2434"/><rect x="112" y="286.6" width="2" height="1.9" fill="#9c2434"/><rect x="117" y="285.1" width="2" height="3.4" fill="#9c2434"/><rect x="121" y="283.3" width="2" height="5.2" fill="#9c2434"/><rect x="126" y="282.1" width="2" height="6.4" fill="#9c2434"/><rect x="130" y="281.8" width="2" height="6.7" fill="#9c2434"/><rect x="134" y="281.9" width="2" height="6.6" fill="#9c2434"/><rect x="139" y="282.1" width="2" height="6.4" fill="#9c2434"/><rect x="143" y="284.2" width="2" height="4.3" fill="#9c2434"/><rect x="148" y="285.2" width="2" height="3.3" fill="#9c2434"/><rect x="152" y="285.9" width="2" height="2.6" fill="#9c2434"/><rect x="157" y="287.6" width="2" height="0.9" fill="#9c2434"/><rect x="161" y="288.5" width="2" height="1.4" fill="#9c2434"/><rect x="166" y="288.5" width="2" height="4.5" fill="#9c2434"/><rect x="170" y="288.5" width="2" height="7.4" fill="#9c2434"/><rect x="175" y="288.5" width="2" height="8.3" fill="#9c2434"/><rect x="179" y="288.5" width="2" height="11.2" fill="#9c2434"/><rect x="184" y="288.5" width="2" height="7.8" fill="#9c2434"/><rect x="188" y="288.5" width="2" height="6.9" fill="#9c2434"/><rect x="193" y="288.5" width="2" height="6" fill="#9c2434"/><rect x="197" y="288.5" width="2" height="5.6" fill="#9c2434"/><rect x="202" y="288.5" width="2" height="5" fill="#9c2434"/><rect x="206" y="288.5" width="2" height="3.8" fill="#9c2434"/><rect x="210" y="288.5" width="2" height="7" fill="#9c2434"/><rect x="215" y="288.5" width="2" height="10.4" fill="#9c2434"/><rect x="219" y="288.5" width="2" height="10.4" fill="#9c2434"/><rect x="224" y="288.5" width="2" height="9.8" fill="#9c2434"/><rect x="228" y="288.5" width="2" height="8.4" fill="#9c2434"/><rect x="233" y="288.5" width="2" height="6.9" fill="#9c2434"/><rect x="237" y="288.5" width="2" height="4.7" fill="#9c2434"/><rect x="242" y="288.5" width="2" height="3.8" fill="#9c2434"/><rect x="246" y="288.5" width="2" height="2.8" fill="#9c2434"/><rect x="251" y="288.5" width="2" height="2" fill="#9c2434"/><rect x="255" y="288.5" width="2" height="1.2" fill="#9c2434"/><rect x="260" y="288.5" width="2" height="1.6" fill="#9c2434"/><rect x="264" y="288.5" width="2" height="2.4" fill="#9c2434"/><rect x="269" y="288.5" width="2" height="2.1" fill="#9c2434"/><rect x="273" y="288.5" width="2" height="1.8" fill="#9c2434"/><rect x="282" y="287.2" width="2" height="1.3" fill="#9c2434"/><rect x="286" y="286.7" width="2" height="1.8" fill="#9c2434"/><rect x="291" y="286.1" width="2" height="2.4" fill="#9c2434"/><rect x="295" y="284.9" width="2" height="3.6" fill="#9c2434"/><rect x="300" y="283.9" width="2" height="4.6" fill="#9c2434"/><rect x="304" y="283.6" width="2" height="4.9" fill="#9c2434"/><rect x="309" y="283.6" width="2" height="4.9" fill="#9c2434"/><rect x="313" y="283.3" width="2" height="5.2" fill="#9c2434"/><rect x="318" y="283.1" width="2" height="5.4" fill="#9c2434"/><rect x="322" y="283" width="2" height="5.5" fill="#9c2434"/><rect x="327" y="283.5" width="2" height="5" fill="#9c2434"/><rect x="331" y="283.9" width="2" height="4.6" fill="#9c2434"/><rect x="336" y="283.8" width="2" height="4.7" fill="#9c2434"/><rect x="340" y="284.3" width="2" height="4.2" fill="#9c2434"/><rect x="345" y="287.1" width="2" height="1.4" fill="#9c2434"/><rect x="367" y="288.5" width="2" height="2.6" fill="#9c2434"/><rect x="371" y="288.5" width="2" height="4.4" fill="#9c2434"/><rect x="376" y="288.5" width="2" height="3.9" fill="#9c2434"/><rect x="380" y="288.5" width="2" height="3.3" fill="#9c2434"/><rect x="385" y="288.5" width="2" height="2.6" fill="#9c2434"/><rect x="407" y="287.4" width="2" height="1.1" fill="#9c2434"/><rect x="412" y="285.4" width="2" height="3.1" fill="#9c2434"/><rect x="421" y="287.7" width="2" height="0.8" fill="#9c2434"/><rect x="425" y="287.1" width="2" height="1.4" fill="#9c2434"/><rect x="430" y="287.2" width="2" height="1.3" fill="#9c2434"/><rect x="434" y="288.5" width="2" height="1.3" fill="#9c2434"/><rect x="438" y="288.5" width="2" height="3.9" fill="#9c2434"/><rect x="443" y="288.5" width="2" height="6.4" fill="#9c2434"/><rect x="447" y="288.5" width="2" height="7.3" fill="#9c2434"/><rect x="452" y="288.5" width="2" height="7.9" fill="#9c2434"/><rect x="456" y="288.5" width="2" height="8.2" fill="#9c2434"/><rect x="461" y="288.5" width="2" height="10.4" fill="#9c2434"/><rect x="465" y="288.5" width="2" height="11" fill="#9c2434"/><rect x="470" y="288.5" width="2" height="10.9" fill="#9c2434"/><rect x="474" y="288.5" width="2" height="11.9" fill="#9c2434"/><rect x="479" y="288.5" width="2" height="13.4" fill="#9c2434"/><rect x="483" y="288.5" width="2" height="13.9" fill="#9c2434"/><rect x="488" y="288.5" width="2" height="12.6" fill="#9c2434"/><rect x="492" y="288.5" width="2" height="12.1" fill="#9c2434"/><rect x="497" y="288.5" width="2" height="11.4" fill="#9c2434"/><rect x="501" y="288.5" width="2" height="10.7" fill="#9c2434"/><rect x="506" y="288.5" width="2" height="10.1" fill="#9c2434"/><rect x="510" y="288.5" width="2" height="9.9" fill="#9c2434"/><rect x="514" y="288.5" width="2" height="8.3" fill="#9c2434"/><rect x="519" y="288.5" width="2" height="6.8" fill="#9c2434"/><rect x="523" y="288.5" width="2" height="3.8" fill="#9c2434"/><rect x="532" y="284.9" width="2" height="3.6" fill="#9c2434"/><rect x="537" y="283.6" width="2" height="4.9" fill="#9c2434"/><rect x="541" y="283.5" width="2" height="5" fill="#9c2434"/><rect x="546" y="284.8" width="2" height="3.7" fill="#9c2434"/><rect x="550" y="287.2" width="2" height="1.3" fill="#9c2434"/><rect x="568" y="288.5" width="2" height="1.1" fill="#9c2434"/><rect x="573" y="288.5" width="2" height="1.8" fill="#9c2434"/><rect x="577" y="288.5" width="2" height="1.3" fill="#9c2434"/><rect x="599" y="288.5" width="2" height="1.7" fill="#9c2434"/><rect x="604" y="288.5" width="2" height="3.5" fill="#9c2434"/><rect x="608" y="288.5" width="2" height="4.8" fill="#9c2434"/><rect x="613" y="288.5" width="2" height="5.7" fill="#9c2434"/><rect x="617" y="288.5" width="2" height="6" fill="#9c2434"/><rect x="622" y="288.5" width="2" height="6.2" fill="#9c2434"/><rect x="626" y="288.5" width="2" height="6.3" fill="#9c2434"/><rect x="631" y="288.5" width="2" height="5.3" fill="#9c2434"/><rect x="635" y="288.5" width="2" height="3.8" fill="#9c2434"/><rect x="640" y="288.5" width="2" height="1.4" fill="#9c2434"/><rect x="649" y="285.5" width="2" height="3" fill="#9c2434"/><rect x="653" y="283.1" width="2" height="5.4" fill="#9c2434"/><rect x="657" y="281.4" width="2" height="7.1" fill="#9c2434"/><rect x="662" y="280.3" width="2" height="8.2" fill="#9c2434"/><rect x="666" y="279.7" width="2" height="8.8" fill="#9c2434"/><rect x="671" y="279.2" width="2" height="9.3" fill="#9c2434"/><rect x="675" y="278.5" width="2" height="10" fill="#9c2434"/><rect x="680" y="282.7" width="2" height="5.8" fill="#9c2434"/><rect x="684" y="283.9" width="2" height="4.6" fill="#9c2434"/><rect x="689" y="284.6" width="2" height="3.9" fill="#9c2434"/><rect x="693" y="284.9" width="2" height="3.6" fill="#9c2434"/><rect x="698" y="284.9" width="2" height="3.6" fill="#9c2434"/><rect x="702" y="284.4" width="2" height="4.1" fill="#9c2434"/><rect x="707" y="283.7" width="2" height="4.8" fill="#9c2434"/><rect x="711" y="283.2" width="2" height="5.3" fill="#9c2434"/><rect x="716" y="282.2" width="2" height="6.3" fill="#9c2434"/><rect x="720" y="281.8" width="2" height="6.7" fill="#9c2434"/><rect x="725" y="281.5" width="2" height="7" fill="#9c2434"/><rect x="729" y="281.1" width="2" height="7.4" fill="#9c2434"/><rect x="733" y="282" width="2" height="6.5" fill="#9c2434"/><rect x="738" y="283" width="2" height="5.5" fill="#9c2434"/><rect x="742" y="284.2" width="2" height="4.3" fill="#9c2434"/><rect x="747" y="285.1" width="2" height="3.4" fill="#9c2434"/><rect x="751" y="285.9" width="2" height="2.6" fill="#9c2434"/><rect x="756" y="286.7" width="2" height="1.8" fill="#9c2434"/><rect x="765" y="288.5" width="2" height="2.2" fill="#9c2434"/><rect x="769" y="288.5" width="2" height="3.7" fill="#9c2434"/><rect x="774" y="288.5" width="2" height="4.8" fill="#9c2434"/><rect x="778" y="288.5" width="2" height="5.8" fill="#9c2434"/><rect x="783" y="288.5" width="2" height="6" fill="#9c2434"/><rect x="787" y="288.5" width="2" height="5.3" fill="#9c2434"/><rect x="792" y="288.5" width="2" height="4.5" fill="#9c2434"/><rect x="796" y="288.5" width="2" height="2.6" fill="#9c2434"/><rect x="801" y="288.5" width="2" height="1.5" fill="#9c2434"/><rect x="805" y="288.5" width="2" height="1.3" fill="#9c2434"/><rect x="809" y="288.5" width="2" height="1.7" fill="#9c2434"/><rect x="814" y="288.5" width="2" height="5.1" fill="#9c2434"/><rect x="818" y="288.5" width="2" height="7.1" fill="#9c2434"/><rect x="823" y="288.5" width="2" height="8.4" fill="#9c2434"/><rect x="827" y="288.5" width="2" height="7.9" fill="#9c2434"/><rect x="832" y="288.5" width="2" height="7" fill="#9c2434"/></g><path d="M11.3 280.4 L15.2 280.4 L23 281 L29.5 283 L37.3 283 L49 280.4 L59.5 278.4 L75 280.4 L86.8 279.7 L93.3 275.8 L101.1 273.2 L106.4 274.5 L114.2 272.6 L124.6 265.4 L132.4 261.8 L140.2 258.9 L144.1 260.2 L155.2 260.5 L165.6 264.8 L170.8 270.6 L176 273.2 L180.6 279.1 L183.9 278.4 L195.6 278.4 L202.1 280.4 L206.6 279.1 L211.2 283 L216.4 289.5 L222.9 292.8 L233.3 294.1 L241.1 293.4 L249 292.1 L258 290.8 L267.2 292.8 L275 291.5 L280.2 288.2 L288 286.9 L293.2 285 L298.4 282.3 L303 280.4 L313.4 277.1 L322.6 273.2 L331.7 271.3 L340.8 269.1 L347.3 271.9 L355.1 273.9 L360.3 271.9 L365.5 273.9 L372 278.2 L387.7 278.4 L392.9 276.1 L400.7 275.2 L407.2 274.3 L413.7 270.4 L418.9 273.2 L424.1 270.6 L430.6 270 L436.5 273.2 L445.6 281 L458.6 287.6 L463.9 292.8 L470.4 295.4 L475.6 299.3 L484.7 307.1 L495.1 312.3 L505.5 316.2 L512 318.8 L522.4 318.8 L526.4 316.2 L534.2 308.4 L540.7 304.9 L549.8 304.9 L553.7 307.1 L566.7 307.1 L575.2 308.4 L583 306.8 L596 305.1 L602.6 308.4 L611.7 313.6 L622.1 318.2 L628.6 320.1 L636.4 319.2 L646.8 313.6 L654.6 307.1 L665.1 299.9 L676.8 292.8 L682 295.4 L692.4 294.7 L700.2 292.8 L706.7 290.2 L713.2 287.6 L720.4 283.6 L729.5 278.4 L737.3 277.1 L756.9 277.1 L766 281 L781.6 288.2 L793.3 288.2 L801.1 286.3 L810.3 286.3 L816.8 291.5 L824.6 296.7 L832.4 299.3" fill="none" stroke="#121260" stroke-width="1.2" stroke-linejoin="round" /><g fill="#e02424"><circle cx="16" cy="282.3" r="1.45"/><circle cx="20.5" cy="282.3" r="1.45"/><circle cx="24.9" cy="282.3" r="1.45"/><circle cx="29.4" cy="282.3" r="1.45"/><circle cx="33.9" cy="282.3" r="1.45"/><circle cx="38.4" cy="282.1" r="1.45"/><circle cx="42.8" cy="281.7" r="1.45"/><circle cx="47.3" cy="281.2" r="1.45"/><circle cx="51.8" cy="280.8" r="1.45"/><circle cx="56.2" cy="280.2" r="1.45"/><circle cx="60.7" cy="279.7" r="1.45"/><circle cx="65.2" cy="279.1" r="1.45"/><circle cx="69.6" cy="279.2" r="1.45"/><circle cx="74.1" cy="279.2" r="1.45"/><circle cx="78.6" cy="279.3" r="1.45"/><circle cx="83" cy="279.4" r="1.45"/><circle cx="87.5" cy="279.5" r="1.45"/><circle cx="92" cy="278.9" r="1.45"/><circle cx="96.5" cy="278.1" r="1.45"/><circle cx="100.9" cy="277.3" r="1.45"/><circle cx="105.4" cy="276.4" r="1.45"/><circle cx="109.9" cy="275.5" r="1.45"/><circle cx="114.3" cy="274.6" r="1.45"/><circle cx="118.8" cy="273.3" r="1.45"/><circle cx="123.3" cy="272" r="1.45"/><circle cx="127.8" cy="270.6" r="1.45"/><circle cx="132.2" cy="268.9" r="1.45"/><circle cx="136.7" cy="267.1" r="1.45"/><circle cx="141.2" cy="265.3" r="1.45"/><circle cx="145.6" cy="264.5" r="1.45"/><circle cx="150.1" cy="263.6" r="1.45"/><circle cx="154.6" cy="263.1" r="1.45"/><circle cx="159" cy="262.7" r="1.45"/><circle cx="163.5" cy="262.2" r="1.45"/><circle cx="168" cy="262.2" r="1.45"/><circle cx="172.4" cy="263.7" r="1.45"/><circle cx="176.9" cy="265.2" r="1.45"/><circle cx="181.4" cy="267.8" r="1.45"/><circle cx="185.9" cy="270.6" r="1.45"/><circle cx="190.3" cy="271.5" r="1.45"/><circle cx="194.8" cy="272.4" r="1.45"/><circle cx="199.3" cy="273.7" r="1.45"/><circle cx="203.7" cy="275.1" r="1.45"/><circle cx="208.2" cy="276.1" r="1.45"/><circle cx="212.7" cy="277" r="1.45"/><circle cx="217.1" cy="279.1" r="1.45"/><circle cx="221.6" cy="281.4" r="1.45"/><circle cx="226.1" cy="283.3" r="1.45"/><circle cx="230.6" cy="285.2" r="1.45"/><circle cx="235" cy="287.1" r="1.45"/><circle cx="239.5" cy="288.9" r="1.45"/><circle cx="244" cy="289.2" r="1.45"/><circle cx="248.4" cy="289.5" r="1.45"/><circle cx="252.9" cy="289.6" r="1.45"/><circle cx="257.4" cy="289.8" r="1.45"/><circle cx="261.8" cy="289.9" r="1.45"/><circle cx="266.3" cy="290" r="1.45"/><circle cx="270.8" cy="290.2" r="1.45"/><circle cx="275.3" cy="289.8" r="1.45"/><circle cx="279.7" cy="289.2" r="1.45"/><circle cx="284.2" cy="288.9" r="1.45"/><circle cx="288.7" cy="288.7" r="1.45"/><circle cx="293.1" cy="287.6" r="1.45"/><circle cx="297.6" cy="286.7" r="1.45"/><circle cx="302.1" cy="285.7" r="1.45"/><circle cx="306.6" cy="284.4" r="1.45"/><circle cx="311" cy="283" r="1.45"/><circle cx="315.5" cy="281.7" r="1.45"/><circle cx="320" cy="280.1" r="1.45"/><circle cx="324.4" cy="278.5" r="1.45"/><circle cx="328.9" cy="277.1" r="1.45"/><circle cx="333.4" cy="275.7" r="1.45"/><circle cx="337.8" cy="274.6" r="1.45"/><circle cx="342.3" cy="273.6" r="1.45"/><circle cx="346.8" cy="272.8" r="1.45"/><circle cx="351.2" cy="273" r="1.45"/><circle cx="355.7" cy="273.5" r="1.45"/><circle cx="360.2" cy="272.4" r="1.45"/><circle cx="364.7" cy="272.7" r="1.45"/><circle cx="369.1" cy="273.2" r="1.45"/><circle cx="373.6" cy="273.8" r="1.45"/><circle cx="378.1" cy="274.4" r="1.45"/><circle cx="382.5" cy="275.1" r="1.45"/><circle cx="387" cy="275.8" r="1.45"/><circle cx="391.5" cy="276.4" r="1.45"/><circle cx="395.9" cy="275.9" r="1.45"/><circle cx="400.4" cy="275.4" r="1.45"/><circle cx="404.9" cy="274.9" r="1.45"/><circle cx="409.4" cy="274.5" r="1.45"/><circle cx="413.8" cy="273.8" r="1.45"/><circle cx="418.3" cy="273.2" r="1.45"/><circle cx="422.8" cy="272.5" r="1.45"/><circle cx="427.2" cy="271.7" r="1.45"/><circle cx="431.7" cy="271.5" r="1.45"/><circle cx="436.2" cy="271.3" r="1.45"/><circle cx="440.6" cy="272.3" r="1.45"/><circle cx="445.1" cy="273.6" r="1.45"/><circle cx="449.6" cy="275.3" r="1.45"/><circle cx="454.1" cy="277.1" r="1.45"/><circle cx="458.5" cy="279" r="1.45"/><circle cx="463" cy="280.9" r="1.45"/><circle cx="467.5" cy="283" r="1.45"/><circle cx="471.9" cy="285.1" r="1.45"/><circle cx="476.4" cy="287.5" r="1.45"/><circle cx="480.9" cy="289.9" r="1.45"/><circle cx="485.3" cy="293.2" r="1.45"/><circle cx="489.8" cy="296.7" r="1.45"/><circle cx="494.3" cy="299.4" r="1.45"/><circle cx="498.8" cy="302" r="1.45"/><circle cx="503.2" cy="304.4" r="1.45"/><circle cx="507.7" cy="306.7" r="1.45"/><circle cx="512.2" cy="308.7" r="1.45"/><circle cx="516.6" cy="310.5" r="1.45"/><circle cx="521.1" cy="312" r="1.45"/><circle cx="525.6" cy="313.3" r="1.45"/><circle cx="530" cy="313" r="1.45"/><circle cx="534.5" cy="312.4" r="1.45"/><circle cx="539" cy="311.1" r="1.45"/><circle cx="543.5" cy="309.9" r="1.45"/><circle cx="547.9" cy="308.6" r="1.45"/><circle cx="552.4" cy="307.3" r="1.45"/><circle cx="556.9" cy="307.2" r="1.45"/><circle cx="561.3" cy="307.3" r="1.45"/><circle cx="565.8" cy="306.8" r="1.45"/><circle cx="570.3" cy="306.4" r="1.45"/><circle cx="574.8" cy="306.4" r="1.45"/><circle cx="579.2" cy="306.4" r="1.45"/><circle cx="583.7" cy="306.4" r="1.45"/><circle cx="588.2" cy="306.3" r="1.45"/><circle cx="592.6" cy="305.7" r="1.45"/><circle cx="597.1" cy="305.2" r="1.45"/><circle cx="601.6" cy="305.8" r="1.45"/><circle cx="606" cy="306.4" r="1.45"/><circle cx="610.5" cy="307.7" r="1.45"/><circle cx="615" cy="309" r="1.45"/><circle cx="619.4" cy="310.7" r="1.45"/><circle cx="623.9" cy="312.3" r="1.45"/><circle cx="628.4" cy="313.5" r="1.45"/><circle cx="632.9" cy="314.4" r="1.45"/><circle cx="637.3" cy="315.3" r="1.45"/><circle cx="641.8" cy="315.3" r="1.45"/><circle cx="646.3" cy="315" r="1.45"/><circle cx="650.7" cy="313.9" r="1.45"/><circle cx="655.2" cy="312.6" r="1.45"/><circle cx="659.7" cy="311.2" r="1.45"/><circle cx="664.1" cy="309.2" r="1.45"/><circle cx="668.6" cy="307" r="1.45"/><circle cx="673.1" cy="304.8" r="1.45"/><circle cx="677.6" cy="302.8" r="1.45"/><circle cx="682" cy="300.9" r="1.45"/><circle cx="686.5" cy="299.8" r="1.45"/><circle cx="691" cy="298.8" r="1.45"/><circle cx="695.4" cy="297.7" r="1.45"/><circle cx="699.9" cy="296.6" r="1.45"/><circle cx="704.4" cy="295.5" r="1.45"/><circle cx="708.8" cy="294.4" r="1.45"/><circle cx="713.3" cy="293.1" r="1.45"/><circle cx="717.8" cy="291.7" r="1.45"/><circle cx="722.3" cy="289.6" r="1.45"/><circle cx="726.7" cy="287.3" r="1.45"/><circle cx="731.2" cy="285.6" r="1.45"/><circle cx="735.7" cy="284" r="1.45"/><circle cx="740.1" cy="282.6" r="1.45"/><circle cx="744.6" cy="281.4" r="1.45"/><circle cx="749.1" cy="280.5" r="1.45"/><circle cx="753.5" cy="279.7" r="1.45"/><circle cx="758" cy="279.1" r="1.45"/><circle cx="762.5" cy="278.4" r="1.45"/><circle cx="767" cy="278.9" r="1.45"/><circle cx="771.4" cy="279.4" r="1.45"/><circle cx="775.9" cy="280.5" r="1.45"/><circle cx="780.4" cy="281.5" r="1.45"/><circle cx="784.8" cy="282.2" r="1.45"/><circle cx="789.3" cy="282.9" r="1.45"/><circle cx="793.8" cy="283.7" r="1.45"/><circle cx="798.2" cy="284.5" r="1.45"/><circle cx="802.7" cy="284.8" r="1.45"/><circle cx="807.2" cy="285" r="1.45"/><circle cx="811.7" cy="285.1" r="1.45"/><circle cx="816.1" cy="285.3" r="1.45"/><circle cx="820.6" cy="286.5" r="1.45"/><circle cx="825.1" cy="288.1" r="1.45"/><circle cx="829.5" cy="290.2" r="1.45"/><circle cx="834" cy="292.3" r="1.45"/></g></g><g clip-path="url(#crsi)"><rect x="12" y="334" width="821" height="2" fill="#1c1ca8"/><rect x="12" y="390" width="821" height="2" fill="#1c1ca8"/><path d="M11.3 348.4 L15.2 356.9 L19.1 356.9 L24.3 363.4 L28.2 360.8 L32.8 359.5 L40 353 L46.5 346.5 L51.7 353 L55.6 352.3 L60.1 348.4 L64.7 354.3 L69.2 356.3 L73.2 364.1 L77.1 353 L81.6 350.4 L86.8 355.6 L91.4 349.7 L95.3 338.7 L99.8 343.9 L104.4 353 L109 350.4 L113.5 348.2 L118.1 340 L122.6 337.4 L127.2 335.2 L132.4 332.8 L136.3 332.6 L139.6 336.1 L145.4 344.5 L150 339.3 L154.5 341.3 L158.5 349.7 L162.4 346.5 L166.9 357.6 L171.5 368 L176 359.5 L180.6 374.5 L185.2 357.6 L189.1 356.3 L194.3 356.9 L198.2 359.1 L202.7 360.8 L207.3 355.6 L211.2 370.6 L216.4 375.1 L221 373.2 L225.5 366.7 L230.1 366.4 L234.6 368.6 L238.5 364.7 L243.1 364.1 L247.7 361.2 L254.2 361.2 L260.7 366.7 L265.2 369.3 L269.8 366.7 L274.3 349.7 L279.6 360.2 L284.1 359.5 L288 359.5 L293.2 354.3 L299.1 350.4 L306.9 345.8 L314.1 349.1 L318.6 344.5 L323.2 339.3 L328.4 351.7 L332.3 343.2 L336.9 347.8 L341.4 343.2 L346 361.5 L351.2 360.2 L355.1 354.3 L359.7 347.8 L364.2 362.5 L369.4 362.8 L373.3 361.5 L378.5 356.9 L386.4 356.3 L390.9 351.7 L395.5 351 L399.4 347.8 L404.6 353 L408.5 345.2 L413 342.6 L417.6 358.9 L421.5 352.3 L426.1 349.1 L430.6 351.7 L433.3 354.3 L437.8 363.4 L441.7 367.3 L446.3 368.4 L450.8 368.6 L454.1 369.9 L458 368 L462.6 378.4 L466.5 369.3 L471 369.3 L474.9 382.3 L480.1 382.3 L484.7 385.5 L489.2 379.4 L493.8 384.9 L497.7 382.9 L502.9 386.2 L507.5 383.6 L511.4 387.5 L515.9 384.2 L520.5 382.3 L525.7 376.4 L529.6 363.4 L534.2 362.5 L538.7 362.8 L543.3 369.9 L547.2 374.5 L551.7 378.4 L556.3 378.4 L560.2 374.5 L565.4 379 L570 375.1 L574.5 382.3 L578.5 373.2 L583.7 369.9 L588.2 372.5 L592.8 375.1 L596.7 379 L601.3 381.6 L605.2 386.8 L609.1 389.5 L614.3 392.1 L618.8 393 L623.4 393.4 L627.3 396.4 L632.5 384.9 L636.4 384.2 L641 378.4 L645.5 373.8 L650.1 368 L654 360.8 L658.5 362.8 L663.1 360.2 L667.7 354.7 L672.2 355.2 L676.8 357.3 L681.3 373.2 L685.9 368.6 L690.4 369.9 L695 364.1 L699.6 359.5 L704.1 358.2 L708.7 353.4 L712.6 353.4 L717.2 344.5 L723 344.5 L726.3 343.2 L730.2 340.6 L735.4 351 L739.3 346.5 L744.5 354.3 L749.1 350.4 L754.3 348.4 L756.9 349.7 L761.4 358.9 L766 369.3 L771.2 366.7 L775.8 369.3 L779.7 371.2 L784.2 366.7 L788.1 363.4 L793.3 362.1 L797.2 353 L801.8 354.3 L806.4 356.9 L810.9 362.8 L815.5 379.7 L820 382.3 L824.6 380.3 L829.1 386.2 L833 379" fill="none" stroke="#f09434" stroke-width="1.05" stroke-linejoin="round" /><g clip-path="url(#crsimag)"><path d="M11.3 348.4 L15.2 356.9 L19.1 356.9 L24.3 363.4 L28.2 360.8 L32.8 359.5 L40 353 L46.5 346.5 L51.7 353 L55.6 352.3 L60.1 348.4 L64.7 354.3 L69.2 356.3 L73.2 364.1 L77.1 353 L81.6 350.4 L86.8 355.6 L91.4 349.7 L95.3 338.7 L99.8 343.9 L104.4 353 L109 350.4 L113.5 348.2 L118.1 340 L122.6 337.4 L127.2 335.2 L132.4 332.8 L136.3 332.6 L139.6 336.1 L145.4 344.5 L150 339.3 L154.5 341.3 L158.5 349.7 L162.4 346.5 L166.9 357.6 L171.5 368 L176 359.5 L180.6 374.5 L185.2 357.6 L189.1 356.3 L194.3 356.9 L198.2 359.1 L202.7 360.8 L207.3 355.6 L211.2 370.6 L216.4 375.1 L221 373.2 L225.5 366.7 L230.1 366.4 L234.6 368.6 L238.5 364.7 L243.1 364.1 L247.7 361.2 L254.2 361.2 L260.7 366.7 L265.2 369.3 L269.8 366.7 L274.3 349.7 L279.6 360.2 L284.1 359.5 L288 359.5 L293.2 354.3 L299.1 350.4 L306.9 345.8 L314.1 349.1 L318.6 344.5 L323.2 339.3 L328.4 351.7 L332.3 343.2 L336.9 347.8 L341.4 343.2 L346 361.5 L351.2 360.2 L355.1 354.3 L359.7 347.8 L364.2 362.5 L369.4 362.8 L373.3 361.5 L378.5 356.9 L386.4 356.3 L390.9 351.7 L395.5 351 L399.4 347.8 L404.6 353 L408.5 345.2 L413 342.6 L417.6 358.9 L421.5 352.3 L426.1 349.1 L430.6 351.7 L433.3 354.3 L437.8 363.4 L441.7 367.3 L446.3 368.4 L450.8 368.6 L454.1 369.9 L458 368 L462.6 378.4 L466.5 369.3 L471 369.3 L474.9 382.3 L480.1 382.3 L484.7 385.5 L489.2 379.4 L493.8 384.9 L497.7 382.9 L502.9 386.2 L507.5 383.6 L511.4 387.5 L515.9 384.2 L520.5 382.3 L525.7 376.4 L529.6 363.4 L534.2 362.5 L538.7 362.8 L543.3 369.9 L547.2 374.5 L551.7 378.4 L556.3 378.4 L560.2 374.5 L565.4 379 L570 375.1 L574.5 382.3 L578.5 373.2 L583.7 369.9 L588.2 372.5 L592.8 375.1 L596.7 379 L601.3 381.6 L605.2 386.8 L609.1 389.5 L614.3 392.1 L618.8 393 L623.4 393.4 L627.3 396.4 L632.5 384.9 L636.4 384.2 L641 378.4 L645.5 373.8 L650.1 368 L654 360.8 L658.5 362.8 L663.1 360.2 L667.7 354.7 L672.2 355.2 L676.8 357.3 L681.3 373.2 L685.9 368.6 L690.4 369.9 L695 364.1 L699.6 359.5 L704.1 358.2 L708.7 353.4 L712.6 353.4 L717.2 344.5 L723 344.5 L726.3 343.2 L730.2 340.6 L735.4 351 L739.3 346.5 L744.5 354.3 L749.1 350.4 L754.3 348.4 L756.9 349.7 L761.4 358.9 L766 369.3 L771.2 366.7 L775.8 369.3 L779.7 371.2 L784.2 366.7 L788.1 363.4 L793.3 362.1 L797.2 353 L801.8 354.3 L806.4 356.9 L810.9 362.8 L815.5 379.7 L820 382.3 L824.6 380.3 L829.1 386.2 L833 379" fill="none" stroke="#c030d0" stroke-width="1.3" stroke-linejoin="round" /></g><g clip-path="url(#crsigrn)"><path d="M11.3 348.4 L15.2 356.9 L19.1 356.9 L24.3 363.4 L28.2 360.8 L32.8 359.5 L40 353 L46.5 346.5 L51.7 353 L55.6 352.3 L60.1 348.4 L64.7 354.3 L69.2 356.3 L73.2 364.1 L77.1 353 L81.6 350.4 L86.8 355.6 L91.4 349.7 L95.3 338.7 L99.8 343.9 L104.4 353 L109 350.4 L113.5 348.2 L118.1 340 L122.6 337.4 L127.2 335.2 L132.4 332.8 L136.3 332.6 L139.6 336.1 L145.4 344.5 L150 339.3 L154.5 341.3 L158.5 349.7 L162.4 346.5 L166.9 357.6 L171.5 368 L176 359.5 L180.6 374.5 L185.2 357.6 L189.1 356.3 L194.3 356.9 L198.2 359.1 L202.7 360.8 L207.3 355.6 L211.2 370.6 L216.4 375.1 L221 373.2 L225.5 366.7 L230.1 366.4 L234.6 368.6 L238.5 364.7 L243.1 364.1 L247.7 361.2 L254.2 361.2 L260.7 366.7 L265.2 369.3 L269.8 366.7 L274.3 349.7 L279.6 360.2 L284.1 359.5 L288 359.5 L293.2 354.3 L299.1 350.4 L306.9 345.8 L314.1 349.1 L318.6 344.5 L323.2 339.3 L328.4 351.7 L332.3 343.2 L336.9 347.8 L341.4 343.2 L346 361.5 L351.2 360.2 L355.1 354.3 L359.7 347.8 L364.2 362.5 L369.4 362.8 L373.3 361.5 L378.5 356.9 L386.4 356.3 L390.9 351.7 L395.5 351 L399.4 347.8 L404.6 353 L408.5 345.2 L413 342.6 L417.6 358.9 L421.5 352.3 L426.1 349.1 L430.6 351.7 L433.3 354.3 L437.8 363.4 L441.7 367.3 L446.3 368.4 L450.8 368.6 L454.1 369.9 L458 368 L462.6 378.4 L466.5 369.3 L471 369.3 L474.9 382.3 L480.1 382.3 L484.7 385.5 L489.2 379.4 L493.8 384.9 L497.7 382.9 L502.9 386.2 L507.5 383.6 L511.4 387.5 L515.9 384.2 L520.5 382.3 L525.7 376.4 L529.6 363.4 L534.2 362.5 L538.7 362.8 L543.3 369.9 L547.2 374.5 L551.7 378.4 L556.3 378.4 L560.2 374.5 L565.4 379 L570 375.1 L574.5 382.3 L578.5 373.2 L583.7 369.9 L588.2 372.5 L592.8 375.1 L596.7 379 L601.3 381.6 L605.2 386.8 L609.1 389.5 L614.3 392.1 L618.8 393 L623.4 393.4 L627.3 396.4 L632.5 384.9 L636.4 384.2 L641 378.4 L645.5 373.8 L650.1 368 L654 360.8 L658.5 362.8 L663.1 360.2 L667.7 354.7 L672.2 355.2 L676.8 357.3 L681.3 373.2 L685.9 368.6 L690.4 369.9 L695 364.1 L699.6 359.5 L704.1 358.2 L708.7 353.4 L712.6 353.4 L717.2 344.5 L723 344.5 L726.3 343.2 L730.2 340.6 L735.4 351 L739.3 346.5 L744.5 354.3 L749.1 350.4 L754.3 348.4 L756.9 349.7 L761.4 358.9 L766 369.3 L771.2 366.7 L775.8 369.3 L779.7 371.2 L784.2 366.7 L788.1 363.4 L793.3 362.1 L797.2 353 L801.8 354.3 L806.4 356.9 L810.9 362.8 L815.5 379.7 L820 382.3 L824.6 380.3 L829.1 386.2 L833 379" fill="none" stroke="#30c040" stroke-width="1.3" stroke-linejoin="round" /></g></g><rect x="11.5" y="39.5" width="875.5" height="211.0" fill="none" stroke="#a8bed2" stroke-width="1"/><rect x="11.5" y="256.5" width="875.5" height="67.0" fill="none" stroke="#a8bed2" stroke-width="1"/><rect x="11.5" y="329.5" width="875.5" height="70.0" fill="none" stroke="#a8bed2" stroke-width="1"/><rect x="12" y="257" width="30" height="13" fill="#3c424a"/><text x="13.8" y="267.8" font-family="Liberation Sans" font-size="11.8" fill="#20208a" stroke="#20208a" stroke-width="0.15" textLength="27.6" lengthAdjust="spacingAndGlyphs">MACD</text><rect x="12" y="330" width="17" height="14" fill="#3c424a"/><text x="13.6" y="341" font-family="Liberation Sans" font-size="12" fill="#f0984c" stroke="#f0984c" stroke-width="0.2" textLength="14.6" lengthAdjust="spacingAndGlyphs">RSI</text><g><rect x="33" y="399" width="1" height="4" fill="#a8bed2"/><rect x="60" y="399" width="1" height="4" fill="#a8bed2"/><rect x="86" y="399" width="1" height="4" fill="#a8bed2"/><rect x="113" y="399" width="1" height="4" fill="#a8bed2"/><rect x="140" y="399" width="1" height="4" fill="#a8bed2"/><rect x="167" y="399" width="1" height="4" fill="#a8bed2"/><rect x="194" y="399" width="1" height="4" fill="#a8bed2"/><rect x="221" y="399" width="1" height="4" fill="#a8bed2"/><rect x="247" y="399" width="1" height="4" fill="#a8bed2"/><rect x="274" y="399" width="1" height="4" fill="#a8bed2"/><rect x="292" y="399" width="1" height="4" fill="#a8bed2"/><rect x="319" y="399" width="1" height="4" fill="#a8bed2"/><rect x="346" y="399" width="1" height="4" fill="#a8bed2"/><rect x="373" y="399" width="1" height="4" fill="#a8bed2"/><rect x="399" y="399" width="1" height="4" fill="#a8bed2"/><rect x="426" y="399" width="1" height="4" fill="#a8bed2"/><rect x="453" y="399" width="1" height="4" fill="#a8bed2"/><rect x="480" y="399" width="1" height="4" fill="#a8bed2"/><rect x="507" y="399" width="1" height="4" fill="#a8bed2"/><rect x="534" y="399" width="1" height="4" fill="#a8bed2"/><rect x="560" y="399" width="1" height="4" fill="#a8bed2"/><rect x="587" y="399" width="1" height="4" fill="#a8bed2"/><rect x="614" y="399" width="1" height="4" fill="#a8bed2"/><rect x="641" y="399" width="1" height="4" fill="#a8bed2"/><rect x="668" y="399" width="1" height="4" fill="#a8bed2"/><rect x="695" y="399" width="1" height="4" fill="#a8bed2"/><rect x="721" y="399" width="1" height="4" fill="#a8bed2"/><rect x="748" y="399" width="1" height="4" fill="#a8bed2"/><rect x="775" y="399" width="1" height="4" fill="#a8bed2"/><rect x="802" y="399" width="1" height="4" fill="#a8bed2"/><rect x="829" y="399" width="1" height="4" fill="#a8bed2"/><rect x="855" y="399" width="1" height="4" fill="#a8bed2"/><rect x="882" y="399" width="1" height="4" fill="#a8bed2"/></g><rect x="887" y="49" width="4" height="1" fill="#a8bed2"/><rect x="887" y="81" width="4" height="1" fill="#a8bed2"/><rect x="887" y="113" width="4" height="1" fill="#a8bed2"/><rect x="887" y="145" width="4" height="1" fill="#a8bed2"/><rect x="887" y="177" width="4" height="1" fill="#a8bed2"/><rect x="887" y="241" width="4" height="1" fill="#a8bed2"/><rect x="887" y="288" width="4" height="1" fill="#a8bed2"/><rect x="887" y="348" width="4" height="1" fill="#a8bed2"/><rect x="887" y="376" width="4" height="1" fill="#a8bed2"/><g font-family="Liberation Sans" font-size="11.6" fill="#f4f2ee" stroke="#f4f2ee" stroke-width="0.3"><text x="32.5" y="422" text-anchor="middle">14</text><text x="59.5" y="422" text-anchor="middle">15</text><text x="85.5" y="422" text-anchor="middle">16</text><text x="112.5" y="422" text-anchor="middle">17</text><text x="139.5" y="422" text-anchor="middle">18</text><text x="166.5" y="422" text-anchor="middle">21</text><text x="193.5" y="422" text-anchor="middle">22</text><text x="220.5" y="422" text-anchor="middle">23</text><text x="246.5" y="422" text-anchor="middle">24</text><text x="273.5" y="422" text-anchor="middle">28</text><text x="291.5" y="422" text-anchor="middle">29</text><text x="318.5" y="422" text-anchor="middle">30</text><text x="345.5" y="422" text-anchor="middle">4</text><text x="372.5" y="422" text-anchor="middle">5</text><text x="398.5" y="422" text-anchor="middle">6</text><text x="425.5" y="422" text-anchor="middle">7</text><text x="452.5" y="422" text-anchor="middle">8</text><text x="479.5" y="422" text-anchor="middle">11</text><text x="506.5" y="422" text-anchor="middle">12</text><text x="533.5" y="422" text-anchor="middle">13</text><text x="559.5" y="422" text-anchor="middle">14</text><text x="586.5" y="422" text-anchor="middle">15</text><text x="613.5" y="422" text-anchor="middle">18</text><text x="640.5" y="422" text-anchor="middle">19</text><text x="667.5" y="422" text-anchor="middle">20</text><text x="694.5" y="422" text-anchor="middle">21</text><text x="720.5" y="422" text-anchor="middle">22</text><text x="747.5" y="422" text-anchor="middle">25</text><text x="774.5" y="422" text-anchor="middle">26</text><text x="801.5" y="422" text-anchor="middle">27</text><text x="828.5" y="422" text-anchor="middle">28</text><text x="854.5" y="422" text-anchor="middle">29</text><text x="881.5" y="422" text-anchor="middle">30</text></g><g font-family="Liberation Sans" font-size="11.6" fill="#f4f2ee" stroke="#f4f2ee" stroke-width="0.25"><text x="894.3" y="56" textLength="33.8" lengthAdjust="spacingAndGlyphs">1.2350</text><text x="894.3" y="88" textLength="33.8" lengthAdjust="spacingAndGlyphs">1.2300</text><text x="894.3" y="119.8" textLength="33.8" lengthAdjust="spacingAndGlyphs">1.2250</text><text x="894.3" y="151.7" textLength="33.8" lengthAdjust="spacingAndGlyphs">1.2200</text><text x="894.3" y="183.6" textLength="33.8" lengthAdjust="spacingAndGlyphs">1.2150</text><text x="894.3" y="247.5" textLength="33.8" lengthAdjust="spacingAndGlyphs">1.2050</text><text x="895.5" y="295.3" textLength="34.8" lengthAdjust="spacingAndGlyphs">+0.000</text><text x="894.2" y="355.2">60</text><text x="894.2" y="383.3">40</text></g><rect x="887" y="199" width="48" height="21" fill="#ffffff"/><text x="896" y="212.5" font-family="Liberation Sans" font-size="11" fill="#4a4658" textLength="32" lengthAdjust="spacingAndGlyphs">1.2100</text><rect x="11" y="39" width="31" height="22" fill="#f2f2f2"/><rect x="11" y="39" width="31" height="4.6" fill="#d4d4d4"/><defs><linearGradient id="rg" x1="0" y1="0" x2="0" y2="1"><stop offset="0" stop-color="#f86060"/><stop offset="1" stop-color="#c81828"/></linearGradient><linearGradient id="bg" x1="0" y1="0" x2="0" y2="1"><stop offset="0" stop-color="#4cc0f0"/><stop offset="1" stop-color="#1872bc"/></linearGradient></defs><rect x="15.5" y="47.5" width="9" height="9" rx="1.5" fill="url(#rg)" stroke="#902020" stroke-width="1"/><rect x="28.5" y="47.5" width="9" height="9" rx="1.5" fill="url(#bg)" stroke="#1a4a80" stroke-width="1"/><rect x="42" y="40" width="246" height="13" fill="#3c424a"/><svg x="42" y="39" width="845" height="20"><text x="-28" y="12.6" font-family="Liberation Sans" font-size="11.8" fill="#e42a2a" textLength="133" lengthAdjust="spacingAndGlyphs">Exponential_Moving_Average</text></svg><text x="151.5" y="51.6" font-family="Liberation Sans" font-size="11.8" fill="#2424e4" textLength="133" lengthAdjust="spacingAndGlyphs">Exponential_Moving_Average</text><rect x="12" y="376.5" width="60" height="19" rx="2" fill="#5c6d85" stroke="#c4d4e0" stroke-width="1"/><rect x="11.5" y="376" width="2" height="27" fill="#d8f0f0"/><text x="18.8" y="390.2" font-family="Liberation Sans" font-size="11.4" fill="#f4f4f4" stroke="#f4f4f4" stroke-width="0.25" textLength="46.5" lengthAdjust="spacingAndGlyphs">Дек 2020</text><rect x="346.5" y="376.5" width="61" height="19" rx="2" fill="#5c6d85" stroke="#c4d4e0" stroke-width="1"/><rect x="346.0" y="376" width="2" height="27" fill="#d8f0f0"/><text x="353.3" y="390.2" font-family="Liberation Sans" font-size="11.4" fill="#f4f4f4" stroke="#f4f4f4" stroke-width="0.25" textLength="47" lengthAdjust="spacingAndGlyphs">Янв 2021</text></svg></body></html>
